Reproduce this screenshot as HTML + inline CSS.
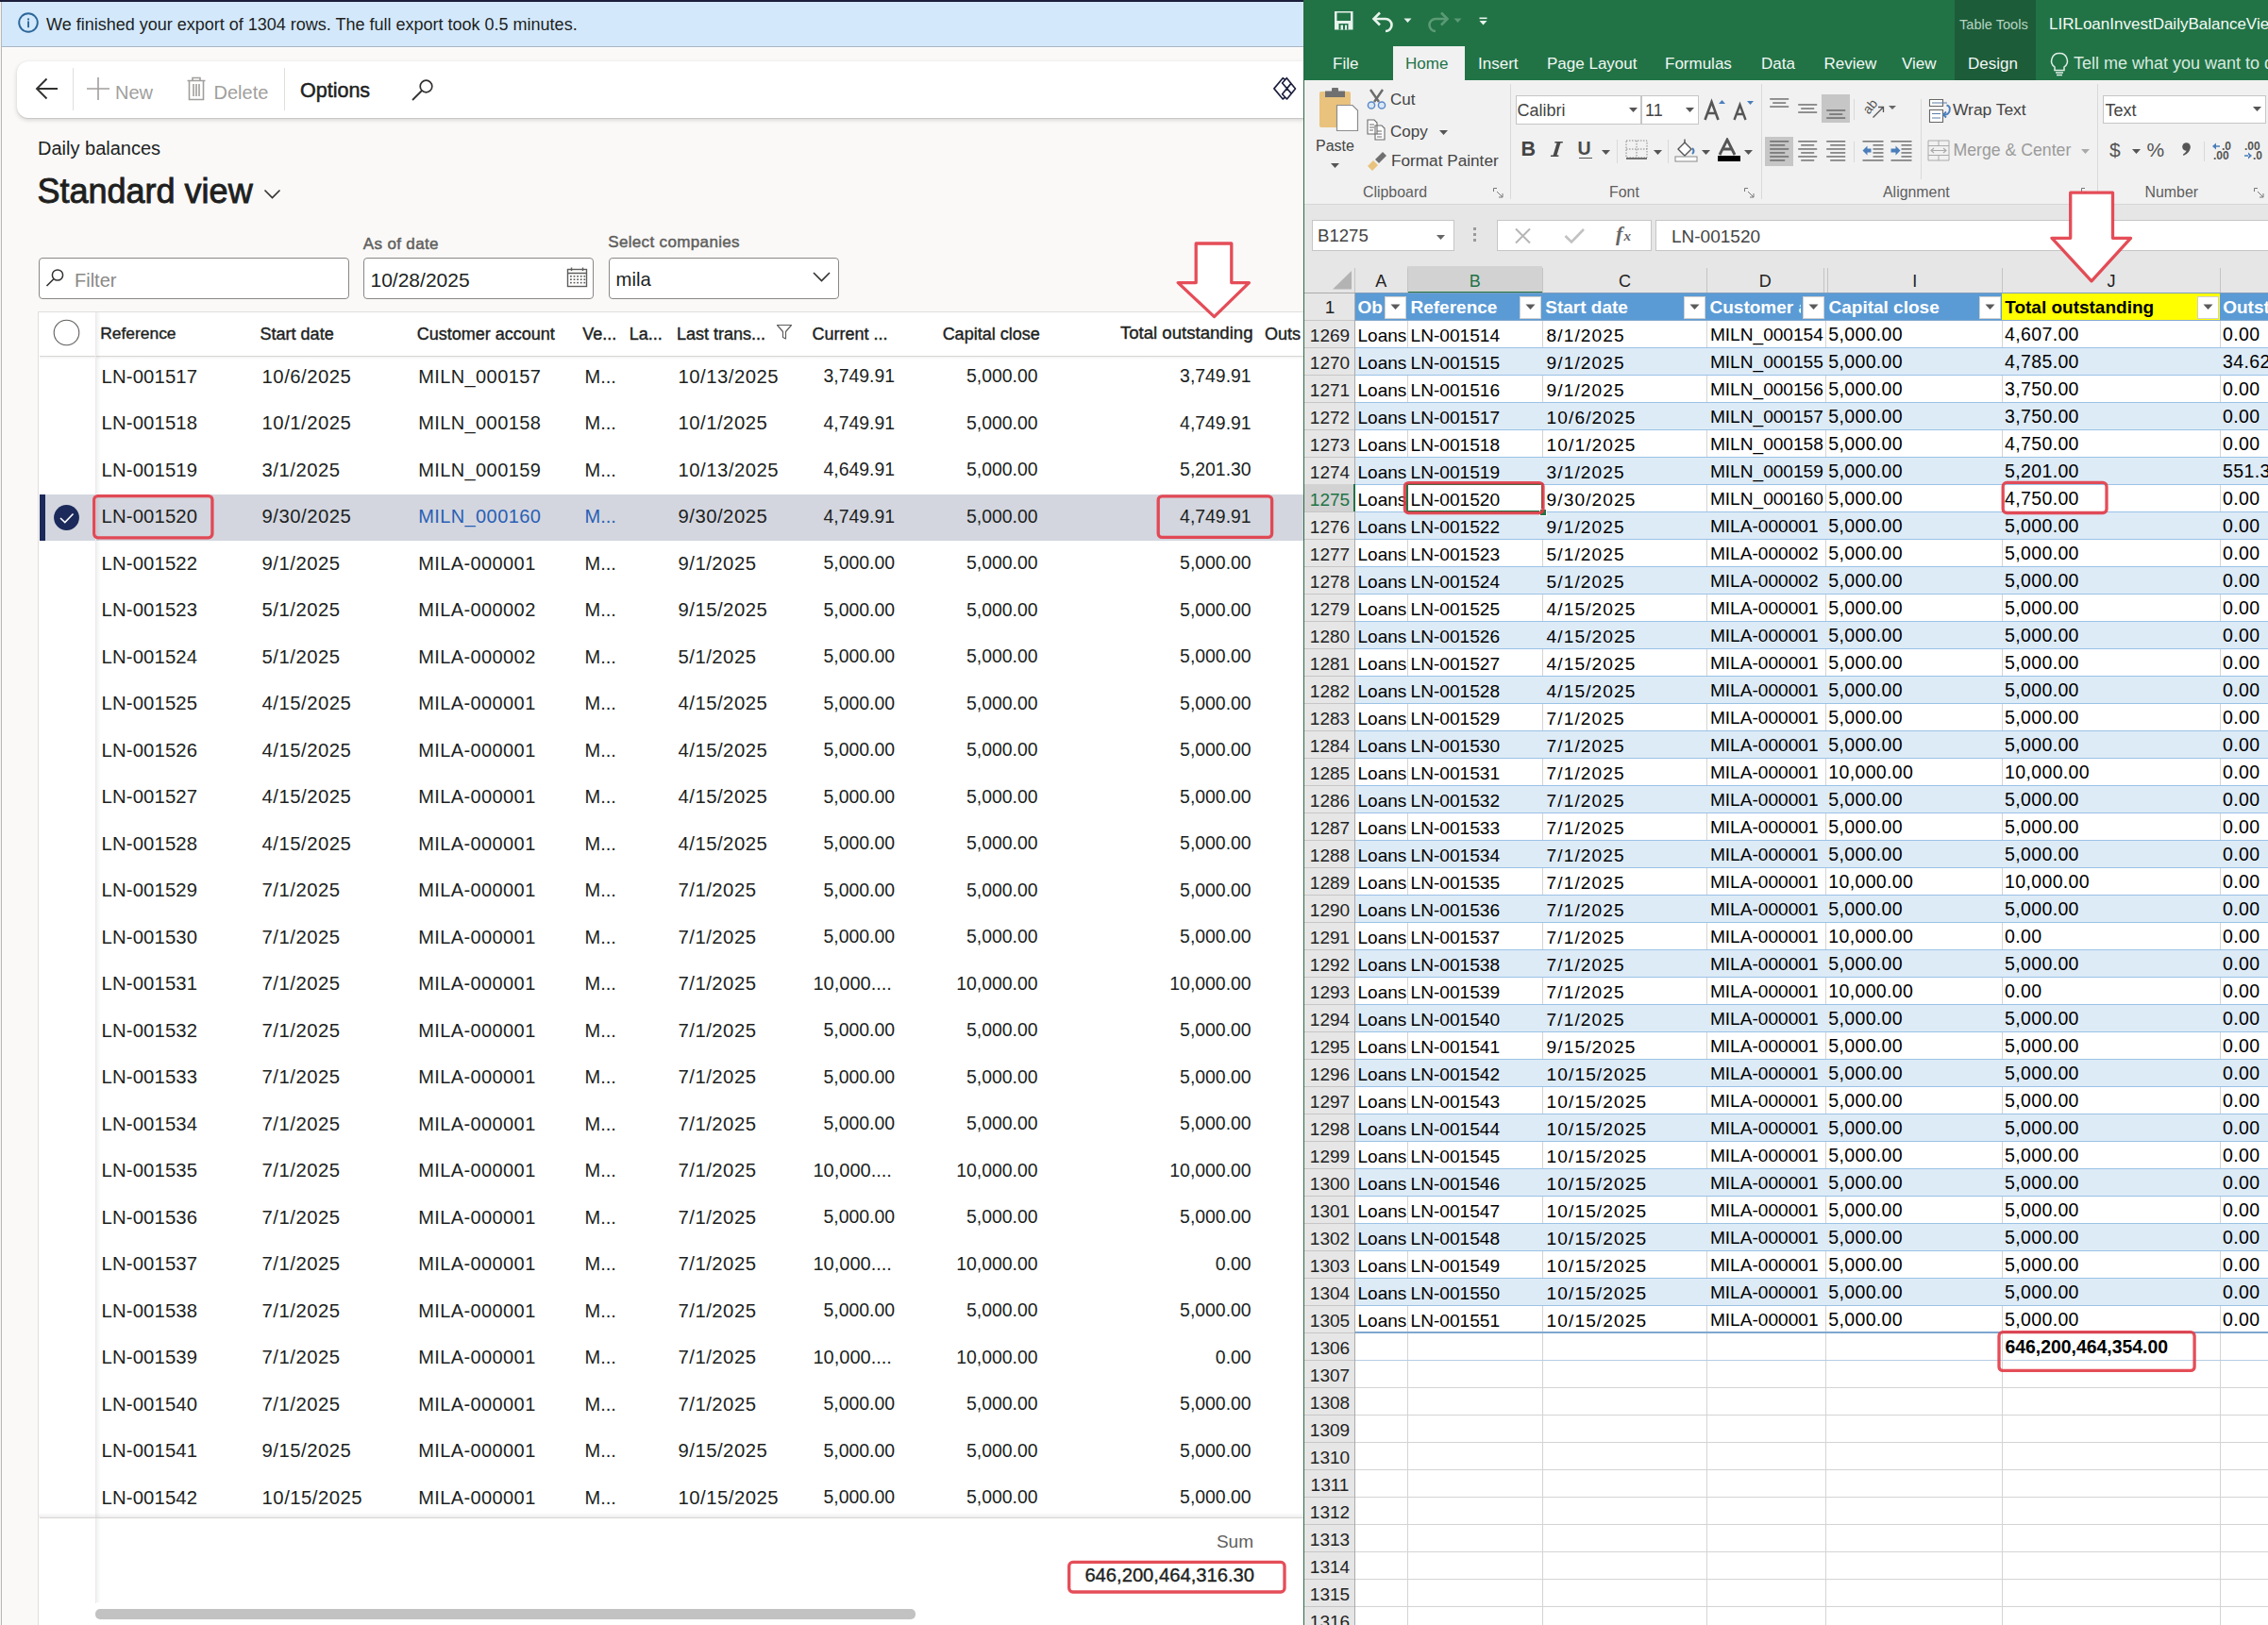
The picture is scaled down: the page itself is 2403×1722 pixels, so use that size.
<!DOCTYPE html>
<html><head><meta charset="utf-8"><title>Daily balances</title>
<style>
html,body{margin:0;padding:0;}
body{width:2403px;height:1722px;overflow:hidden;position:relative;background:#faf9f8;font-family:'Liberation Sans',sans-serif;}
body div, body svg{position:absolute;}
.t{white-space:pre;}
</style></head><body>
<div style="left:0px;top:0px;width:1px;height:1722px;background:#f4f4f4"></div>
<div style="left:1px;top:0px;width:1px;height:1722px;background:#b8b8b8"></div>
<div style="left:2px;top:0px;width:1380px;height:2px;background:#1b1e3c"></div>
<div style="left:0px;top:0px;width:2px;height:2px;background:#1b1e3c"></div>
<div style="left:2px;top:2px;width:1380px;height:47px;background:#d3e8fb"></div>
<div style="left:2px;top:49px;width:1380px;height:1px;background:#a9b5c1"></div>
<div style="left:2px;top:50px;width:1380px;height:1px;background:#ffffff"></div>
<svg style="left:17px;top:11px;" width="26" height="26" viewBox="0 0 26 26"><circle cx="13" cy="13" r="9.8" fill="none" stroke="#2b6699" stroke-width="1.9"/><rect x="12.1" y="8.4" width="1.9" height="2" fill="#2b6699"/><rect x="12.1" y="11.4" width="1.9" height="6.8" fill="#2b6699"/></svg>
<div class="t" style="left:49.0px;top:16.5px;font:normal 18px/18px 'Liberation Sans',sans-serif;color:#201f1e;">We finished your export of 1304 rows. The full export took 0.5 minutes.</div>
<div style="left:18px;top:65px;width:1400px;height:60px;background:#ffffff;border-radius:12px;box-shadow:0 2px 5px rgba(0,0,0,0.16),0 0.3px 0.9px rgba(0,0,0,0.10)"></div>
<svg style="left:36px;top:81px;" width="28" height="26" viewBox="0 0 28 26"><path d="M25 13 H3 M13.5 2.5 L3 13 L13.5 23.5" fill="none" stroke="#323130" stroke-width="1.9" stroke-linecap="butt" stroke-linejoin="miter"/></svg>
<div style="left:77px;top:72px;width:1px;height:45px;background:#e1dfdd"></div>
<svg style="left:90px;top:80px;" width="28" height="28" viewBox="0 0 28 28"><path d="M14 2 V26 M2 14 H26" fill="none" stroke="#a19f9d" stroke-width="1.6"/></svg>
<div class="t" style="left:122.0px;top:88.1px;font:normal 20px/20px 'Liberation Sans',sans-serif;color:#a19f9d;">New</div>
<svg style="left:195px;top:80px;" width="26" height="28" viewBox="0 0 26 28"><path d="M3.5 5.5 H22.5 M9 5.5 V2.5 H17 V5.5 M5.5 5.5 V25.5 H20.5 V5.5 M10 9 V22 M13 9 V22 M16 9 V22" fill="none" stroke="#a19f9d" stroke-width="1.6"/></svg>
<div class="t" style="left:226.5px;top:87.5px;font:normal 20px/20px 'Liberation Sans',sans-serif;color:#a19f9d;">Delete</div>
<div style="left:301px;top:72px;width:1px;height:45px;background:#e1dfdd"></div>
<div class="t" style="left:318.0px;top:86.2px;font:normal 21.5px/21.5px 'Liberation Sans',sans-serif;color:#201f1e;-webkit-text-stroke:0.5px #201f1e">Options</div>
<svg style="left:434px;top:83px;" width="28" height="26" viewBox="0 0 28 26"><circle cx="17.5" cy="8.5" r="6.3" fill="none" stroke="#323130" stroke-width="1.7"/><path d="M13 13 L3 23" stroke="#323130" stroke-width="1.8" fill="none"/></svg>
<svg style="left:1344px;top:78px;" width="34" height="32" viewBox="0 0 34 32"><path d="M17.6 6.6 L15.2 4.7 L5.9 15.9 L15.2 27.0 L17.6 25.1 M19.3 4.7 L28.5 15.9 L19.5 27.0 L14.6 21.7 L24.0 10.4 M19.3 4.7 L14.6 10.0 L24.0 20.9" fill="none" stroke="#1b1f3d" stroke-width="1.65" stroke-linejoin="round" stroke-linecap="round"/></svg>
<div class="t" style="left:40.0px;top:147.1px;font:normal 20px/20px 'Liberation Sans',sans-serif;color:#201f1e;">Daily balances</div>
<div class="t" style="left:39.5px;top:184.8px;font:normal 36px/36px 'Liberation Sans',sans-serif;color:#201f1e;-webkit-text-stroke:0.9px #201f1e">Standard view</div>
<svg style="left:278px;top:198px;" width="22" height="16" viewBox="0 0 22 16"><path d="M2.5 3.5 L10.5 11.5 L18.5 3.5" fill="none" stroke="#323130" stroke-width="1.6"/></svg>
<div style="left:40.5px;top:272.5px;width:327px;height:42px;background:#ffffff;border:1px solid #8a8886;border-radius:4px"></div>
<svg style="left:47px;top:283px;" width="24" height="24" viewBox="0 0 24 24"><circle cx="14" cy="8.5" r="5.6" fill="none" stroke="#323130" stroke-width="1.5"/><path d="M10 12.5 L2.5 20" stroke="#323130" stroke-width="1.6" fill="none"/></svg>
<div class="t" style="left:79.0px;top:286.7px;font:normal 20px/20px 'Liberation Sans',sans-serif;color:#8a8886;">Filter</div>
<div class="t" style="left:384.8px;top:249.6px;font:normal 17px/17px 'Liberation Sans',sans-serif;color:#605e5c;-webkit-text-stroke:0.45px #605e5c;letter-spacing:0.35px">As of date</div>
<div style="left:385.2px;top:273.2px;width:242px;height:41.5px;background:#ffffff;border:1px solid #8a8886;border-radius:4px"></div>
<div class="t" style="left:392.5px;top:285.8px;font:normal 21px/21px 'Liberation Sans',sans-serif;color:#201f1e;">10/28/2025</div>
<svg style="left:599px;top:282px;" width="26" height="24" viewBox="0 0 26 24"><rect x="2.5" y="3.5" width="20" height="18" fill="none" stroke="#605e5c" stroke-width="1.4"/><path d="M2.5 7.5 H22.5 M6.5 1.5 V5 M18.5 1.5 V5" stroke="#605e5c" stroke-width="1.4" fill="none"/><rect x="5.0" y="10.0" width="1.8" height="1.6" fill="#605e5c"/><rect x="5.0" y="13.4" width="1.8" height="1.6" fill="#605e5c"/><rect x="5.0" y="16.8" width="1.8" height="1.6" fill="#605e5c"/><rect x="8.6" y="10.0" width="1.8" height="1.6" fill="#605e5c"/><rect x="8.6" y="13.4" width="1.8" height="1.6" fill="#605e5c"/><rect x="8.6" y="16.8" width="1.8" height="1.6" fill="#605e5c"/><rect x="12.2" y="10.0" width="1.8" height="1.6" fill="#605e5c"/><rect x="12.2" y="13.4" width="1.8" height="1.6" fill="#605e5c"/><rect x="12.2" y="16.8" width="1.8" height="1.6" fill="#605e5c"/><rect x="15.8" y="10.0" width="1.8" height="1.6" fill="#605e5c"/><rect x="15.8" y="13.4" width="1.8" height="1.6" fill="#605e5c"/><rect x="15.8" y="16.8" width="1.8" height="1.6" fill="#605e5c"/><rect x="19.4" y="10.0" width="1.8" height="1.6" fill="#605e5c"/><rect x="19.4" y="13.4" width="1.8" height="1.6" fill="#605e5c"/><rect x="19.4" y="16.8" width="1.8" height="1.6" fill="#605e5c"/></svg>
<div class="t" style="left:644.2px;top:248.3px;font:normal 17px/17px 'Liberation Sans',sans-serif;color:#605e5c;-webkit-text-stroke:0.45px #605e5c;letter-spacing:0.35px">Select companies</div>
<div style="left:645.3px;top:272.5px;width:241.5px;height:42px;background:#ffffff;border:1px solid #8a8886;border-radius:4px"></div>
<div class="t" style="left:652.5px;top:286.4px;font:normal 20.3px/20.3px 'Liberation Sans',sans-serif;color:#201f1e;">mila</div>
<svg style="left:859px;top:285px;" width="24" height="18" viewBox="0 0 24 18"><path d="M3 4 L11.5 12.5 L20 4" fill="none" stroke="#323130" stroke-width="1.6"/></svg>
<div style="left:40px;top:329.5px;width:1400px;height:1400px;background:#ffffff;border-top:1px solid #e1dfdd;border-left:1px solid #e1dfdd"></div>
<div style="left:41.5px;top:523.5px;width:1340px;height:49px;background:#d3d6df"></div>
<div style="left:41.5px;top:523.5px;width:6px;height:49px;background:#1b2a5a"></div>
<svg style="left:55px;top:532.7px;" width="32" height="32" viewBox="0 0 32 32"><circle cx="15.5" cy="15.5" r="13.4" fill="#1b2a5a"/><path d="M9 16 L13.8 20.6 L22.5 11.5" fill="none" stroke="#ffffff" stroke-width="1.6"/></svg>
<div class="t" style="left:107.5px;top:388.5px;font:normal 20.3px/20.3px 'Liberation Sans',sans-serif;color:#201f1e;letter-spacing:0.15px">LN-001517</div>
<div class="t" style="left:277.6px;top:388.5px;font:normal 20.3px/20.3px 'Liberation Sans',sans-serif;color:#201f1e;letter-spacing:0.5px">10/6/2025</div>
<div class="t" style="left:443.2px;top:388.8px;font:normal 20px/20px 'Liberation Sans',sans-serif;color:#201f1e;letter-spacing:0.4px">MILN_000157</div>
<div class="t" style="left:619.5px;top:388.8px;font:normal 20px/20px 'Liberation Sans',sans-serif;color:#201f1e;">M...</div>
<div class="t" style="left:718.5px;top:388.5px;font:normal 20.3px/20.3px 'Liberation Sans',sans-serif;color:#201f1e;letter-spacing:0.5px">10/13/2025</div>
<div class="t" style="left:-52.0px;width:1000px;text-align:right;top:389.3px;font:normal 19.4px/19.4px 'Liberation Sans',sans-serif;color:#201f1e;">3,749.91</div>
<div class="t" style="left:99.5px;width:1000px;text-align:right;top:389.3px;font:normal 19.4px/19.4px 'Liberation Sans',sans-serif;color:#201f1e;">5,000.00</div>
<div class="t" style="left:325.6px;width:1000px;text-align:right;top:389.3px;font:normal 19.4px/19.4px 'Liberation Sans',sans-serif;color:#201f1e;">3,749.91</div>
<div class="t" style="left:107.5px;top:438.0px;font:normal 20.3px/20.3px 'Liberation Sans',sans-serif;color:#201f1e;letter-spacing:0.15px">LN-001518</div>
<div class="t" style="left:277.6px;top:438.0px;font:normal 20.3px/20.3px 'Liberation Sans',sans-serif;color:#201f1e;letter-spacing:0.5px">10/1/2025</div>
<div class="t" style="left:443.2px;top:438.3px;font:normal 20px/20px 'Liberation Sans',sans-serif;color:#201f1e;letter-spacing:0.4px">MILN_000158</div>
<div class="t" style="left:619.5px;top:438.3px;font:normal 20px/20px 'Liberation Sans',sans-serif;color:#201f1e;">M...</div>
<div class="t" style="left:718.5px;top:438.0px;font:normal 20.3px/20.3px 'Liberation Sans',sans-serif;color:#201f1e;letter-spacing:0.5px">10/1/2025</div>
<div class="t" style="left:-52.0px;width:1000px;text-align:right;top:438.8px;font:normal 19.4px/19.4px 'Liberation Sans',sans-serif;color:#201f1e;">4,749.91</div>
<div class="t" style="left:99.5px;width:1000px;text-align:right;top:438.8px;font:normal 19.4px/19.4px 'Liberation Sans',sans-serif;color:#201f1e;">5,000.00</div>
<div class="t" style="left:325.6px;width:1000px;text-align:right;top:438.8px;font:normal 19.4px/19.4px 'Liberation Sans',sans-serif;color:#201f1e;">4,749.91</div>
<div class="t" style="left:107.5px;top:487.5px;font:normal 20.3px/20.3px 'Liberation Sans',sans-serif;color:#201f1e;letter-spacing:0.15px">LN-001519</div>
<div class="t" style="left:277.6px;top:487.5px;font:normal 20.3px/20.3px 'Liberation Sans',sans-serif;color:#201f1e;letter-spacing:0.5px">3/1/2025</div>
<div class="t" style="left:443.2px;top:487.8px;font:normal 20px/20px 'Liberation Sans',sans-serif;color:#201f1e;letter-spacing:0.4px">MILN_000159</div>
<div class="t" style="left:619.5px;top:487.8px;font:normal 20px/20px 'Liberation Sans',sans-serif;color:#201f1e;">M...</div>
<div class="t" style="left:718.5px;top:487.5px;font:normal 20.3px/20.3px 'Liberation Sans',sans-serif;color:#201f1e;letter-spacing:0.5px">10/13/2025</div>
<div class="t" style="left:-52.0px;width:1000px;text-align:right;top:488.3px;font:normal 19.4px/19.4px 'Liberation Sans',sans-serif;color:#201f1e;">4,649.91</div>
<div class="t" style="left:99.5px;width:1000px;text-align:right;top:488.3px;font:normal 19.4px/19.4px 'Liberation Sans',sans-serif;color:#201f1e;">5,000.00</div>
<div class="t" style="left:325.6px;width:1000px;text-align:right;top:488.3px;font:normal 19.4px/19.4px 'Liberation Sans',sans-serif;color:#201f1e;">5,201.30</div>
<div class="t" style="left:107.5px;top:537.0px;font:normal 20.3px/20.3px 'Liberation Sans',sans-serif;color:#201f1e;letter-spacing:0.15px">LN-001520</div>
<div class="t" style="left:277.6px;top:537.0px;font:normal 20.3px/20.3px 'Liberation Sans',sans-serif;color:#201f1e;letter-spacing:0.5px">9/30/2025</div>
<div class="t" style="left:443.2px;top:537.3px;font:normal 20px/20px 'Liberation Sans',sans-serif;color:#2a5fb5;letter-spacing:0.4px">MILN_000160</div>
<div class="t" style="left:619.5px;top:537.3px;font:normal 20px/20px 'Liberation Sans',sans-serif;color:#2a5fb5;">M...</div>
<div class="t" style="left:718.5px;top:537.0px;font:normal 20.3px/20.3px 'Liberation Sans',sans-serif;color:#201f1e;letter-spacing:0.5px">9/30/2025</div>
<div class="t" style="left:-52.0px;width:1000px;text-align:right;top:537.8px;font:normal 19.4px/19.4px 'Liberation Sans',sans-serif;color:#201f1e;">4,749.91</div>
<div class="t" style="left:99.5px;width:1000px;text-align:right;top:537.8px;font:normal 19.4px/19.4px 'Liberation Sans',sans-serif;color:#201f1e;">5,000.00</div>
<div class="t" style="left:325.6px;width:1000px;text-align:right;top:537.8px;font:normal 19.4px/19.4px 'Liberation Sans',sans-serif;color:#201f1e;">4,749.91</div>
<div class="t" style="left:107.5px;top:586.5px;font:normal 20.3px/20.3px 'Liberation Sans',sans-serif;color:#201f1e;letter-spacing:0.15px">LN-001522</div>
<div class="t" style="left:277.6px;top:586.5px;font:normal 20.3px/20.3px 'Liberation Sans',sans-serif;color:#201f1e;letter-spacing:0.5px">9/1/2025</div>
<div class="t" style="left:443.2px;top:586.8px;font:normal 20px/20px 'Liberation Sans',sans-serif;color:#201f1e;letter-spacing:0.4px">MILA-000001</div>
<div class="t" style="left:619.5px;top:586.8px;font:normal 20px/20px 'Liberation Sans',sans-serif;color:#201f1e;">M...</div>
<div class="t" style="left:718.5px;top:586.5px;font:normal 20.3px/20.3px 'Liberation Sans',sans-serif;color:#201f1e;letter-spacing:0.5px">9/1/2025</div>
<div class="t" style="left:-52.0px;width:1000px;text-align:right;top:587.3px;font:normal 19.4px/19.4px 'Liberation Sans',sans-serif;color:#201f1e;">5,000.00</div>
<div class="t" style="left:99.5px;width:1000px;text-align:right;top:587.3px;font:normal 19.4px/19.4px 'Liberation Sans',sans-serif;color:#201f1e;">5,000.00</div>
<div class="t" style="left:325.6px;width:1000px;text-align:right;top:587.3px;font:normal 19.4px/19.4px 'Liberation Sans',sans-serif;color:#201f1e;">5,000.00</div>
<div class="t" style="left:107.5px;top:636.0px;font:normal 20.3px/20.3px 'Liberation Sans',sans-serif;color:#201f1e;letter-spacing:0.15px">LN-001523</div>
<div class="t" style="left:277.6px;top:636.0px;font:normal 20.3px/20.3px 'Liberation Sans',sans-serif;color:#201f1e;letter-spacing:0.5px">5/1/2025</div>
<div class="t" style="left:443.2px;top:636.3px;font:normal 20px/20px 'Liberation Sans',sans-serif;color:#201f1e;letter-spacing:0.4px">MILA-000002</div>
<div class="t" style="left:619.5px;top:636.3px;font:normal 20px/20px 'Liberation Sans',sans-serif;color:#201f1e;">M...</div>
<div class="t" style="left:718.5px;top:636.0px;font:normal 20.3px/20.3px 'Liberation Sans',sans-serif;color:#201f1e;letter-spacing:0.5px">9/15/2025</div>
<div class="t" style="left:-52.0px;width:1000px;text-align:right;top:636.8px;font:normal 19.4px/19.4px 'Liberation Sans',sans-serif;color:#201f1e;">5,000.00</div>
<div class="t" style="left:99.5px;width:1000px;text-align:right;top:636.8px;font:normal 19.4px/19.4px 'Liberation Sans',sans-serif;color:#201f1e;">5,000.00</div>
<div class="t" style="left:325.6px;width:1000px;text-align:right;top:636.8px;font:normal 19.4px/19.4px 'Liberation Sans',sans-serif;color:#201f1e;">5,000.00</div>
<div class="t" style="left:107.5px;top:685.5px;font:normal 20.3px/20.3px 'Liberation Sans',sans-serif;color:#201f1e;letter-spacing:0.15px">LN-001524</div>
<div class="t" style="left:277.6px;top:685.5px;font:normal 20.3px/20.3px 'Liberation Sans',sans-serif;color:#201f1e;letter-spacing:0.5px">5/1/2025</div>
<div class="t" style="left:443.2px;top:685.8px;font:normal 20px/20px 'Liberation Sans',sans-serif;color:#201f1e;letter-spacing:0.4px">MILA-000002</div>
<div class="t" style="left:619.5px;top:685.8px;font:normal 20px/20px 'Liberation Sans',sans-serif;color:#201f1e;">M...</div>
<div class="t" style="left:718.5px;top:685.5px;font:normal 20.3px/20.3px 'Liberation Sans',sans-serif;color:#201f1e;letter-spacing:0.5px">5/1/2025</div>
<div class="t" style="left:-52.0px;width:1000px;text-align:right;top:686.3px;font:normal 19.4px/19.4px 'Liberation Sans',sans-serif;color:#201f1e;">5,000.00</div>
<div class="t" style="left:99.5px;width:1000px;text-align:right;top:686.3px;font:normal 19.4px/19.4px 'Liberation Sans',sans-serif;color:#201f1e;">5,000.00</div>
<div class="t" style="left:325.6px;width:1000px;text-align:right;top:686.3px;font:normal 19.4px/19.4px 'Liberation Sans',sans-serif;color:#201f1e;">5,000.00</div>
<div class="t" style="left:107.5px;top:735.0px;font:normal 20.3px/20.3px 'Liberation Sans',sans-serif;color:#201f1e;letter-spacing:0.15px">LN-001525</div>
<div class="t" style="left:277.6px;top:735.0px;font:normal 20.3px/20.3px 'Liberation Sans',sans-serif;color:#201f1e;letter-spacing:0.5px">4/15/2025</div>
<div class="t" style="left:443.2px;top:735.3px;font:normal 20px/20px 'Liberation Sans',sans-serif;color:#201f1e;letter-spacing:0.4px">MILA-000001</div>
<div class="t" style="left:619.5px;top:735.3px;font:normal 20px/20px 'Liberation Sans',sans-serif;color:#201f1e;">M...</div>
<div class="t" style="left:718.5px;top:735.0px;font:normal 20.3px/20.3px 'Liberation Sans',sans-serif;color:#201f1e;letter-spacing:0.5px">4/15/2025</div>
<div class="t" style="left:-52.0px;width:1000px;text-align:right;top:735.8px;font:normal 19.4px/19.4px 'Liberation Sans',sans-serif;color:#201f1e;">5,000.00</div>
<div class="t" style="left:99.5px;width:1000px;text-align:right;top:735.8px;font:normal 19.4px/19.4px 'Liberation Sans',sans-serif;color:#201f1e;">5,000.00</div>
<div class="t" style="left:325.6px;width:1000px;text-align:right;top:735.8px;font:normal 19.4px/19.4px 'Liberation Sans',sans-serif;color:#201f1e;">5,000.00</div>
<div class="t" style="left:107.5px;top:784.5px;font:normal 20.3px/20.3px 'Liberation Sans',sans-serif;color:#201f1e;letter-spacing:0.15px">LN-001526</div>
<div class="t" style="left:277.6px;top:784.5px;font:normal 20.3px/20.3px 'Liberation Sans',sans-serif;color:#201f1e;letter-spacing:0.5px">4/15/2025</div>
<div class="t" style="left:443.2px;top:784.8px;font:normal 20px/20px 'Liberation Sans',sans-serif;color:#201f1e;letter-spacing:0.4px">MILA-000001</div>
<div class="t" style="left:619.5px;top:784.8px;font:normal 20px/20px 'Liberation Sans',sans-serif;color:#201f1e;">M...</div>
<div class="t" style="left:718.5px;top:784.5px;font:normal 20.3px/20.3px 'Liberation Sans',sans-serif;color:#201f1e;letter-spacing:0.5px">4/15/2025</div>
<div class="t" style="left:-52.0px;width:1000px;text-align:right;top:785.3px;font:normal 19.4px/19.4px 'Liberation Sans',sans-serif;color:#201f1e;">5,000.00</div>
<div class="t" style="left:99.5px;width:1000px;text-align:right;top:785.3px;font:normal 19.4px/19.4px 'Liberation Sans',sans-serif;color:#201f1e;">5,000.00</div>
<div class="t" style="left:325.6px;width:1000px;text-align:right;top:785.3px;font:normal 19.4px/19.4px 'Liberation Sans',sans-serif;color:#201f1e;">5,000.00</div>
<div class="t" style="left:107.5px;top:834.0px;font:normal 20.3px/20.3px 'Liberation Sans',sans-serif;color:#201f1e;letter-spacing:0.15px">LN-001527</div>
<div class="t" style="left:277.6px;top:834.0px;font:normal 20.3px/20.3px 'Liberation Sans',sans-serif;color:#201f1e;letter-spacing:0.5px">4/15/2025</div>
<div class="t" style="left:443.2px;top:834.3px;font:normal 20px/20px 'Liberation Sans',sans-serif;color:#201f1e;letter-spacing:0.4px">MILA-000001</div>
<div class="t" style="left:619.5px;top:834.3px;font:normal 20px/20px 'Liberation Sans',sans-serif;color:#201f1e;">M...</div>
<div class="t" style="left:718.5px;top:834.0px;font:normal 20.3px/20.3px 'Liberation Sans',sans-serif;color:#201f1e;letter-spacing:0.5px">4/15/2025</div>
<div class="t" style="left:-52.0px;width:1000px;text-align:right;top:834.8px;font:normal 19.4px/19.4px 'Liberation Sans',sans-serif;color:#201f1e;">5,000.00</div>
<div class="t" style="left:99.5px;width:1000px;text-align:right;top:834.8px;font:normal 19.4px/19.4px 'Liberation Sans',sans-serif;color:#201f1e;">5,000.00</div>
<div class="t" style="left:325.6px;width:1000px;text-align:right;top:834.8px;font:normal 19.4px/19.4px 'Liberation Sans',sans-serif;color:#201f1e;">5,000.00</div>
<div class="t" style="left:107.5px;top:883.5px;font:normal 20.3px/20.3px 'Liberation Sans',sans-serif;color:#201f1e;letter-spacing:0.15px">LN-001528</div>
<div class="t" style="left:277.6px;top:883.5px;font:normal 20.3px/20.3px 'Liberation Sans',sans-serif;color:#201f1e;letter-spacing:0.5px">4/15/2025</div>
<div class="t" style="left:443.2px;top:883.8px;font:normal 20px/20px 'Liberation Sans',sans-serif;color:#201f1e;letter-spacing:0.4px">MILA-000001</div>
<div class="t" style="left:619.5px;top:883.8px;font:normal 20px/20px 'Liberation Sans',sans-serif;color:#201f1e;">M...</div>
<div class="t" style="left:718.5px;top:883.5px;font:normal 20.3px/20.3px 'Liberation Sans',sans-serif;color:#201f1e;letter-spacing:0.5px">4/15/2025</div>
<div class="t" style="left:-52.0px;width:1000px;text-align:right;top:884.3px;font:normal 19.4px/19.4px 'Liberation Sans',sans-serif;color:#201f1e;">5,000.00</div>
<div class="t" style="left:99.5px;width:1000px;text-align:right;top:884.3px;font:normal 19.4px/19.4px 'Liberation Sans',sans-serif;color:#201f1e;">5,000.00</div>
<div class="t" style="left:325.6px;width:1000px;text-align:right;top:884.3px;font:normal 19.4px/19.4px 'Liberation Sans',sans-serif;color:#201f1e;">5,000.00</div>
<div class="t" style="left:107.5px;top:933.0px;font:normal 20.3px/20.3px 'Liberation Sans',sans-serif;color:#201f1e;letter-spacing:0.15px">LN-001529</div>
<div class="t" style="left:277.6px;top:933.0px;font:normal 20.3px/20.3px 'Liberation Sans',sans-serif;color:#201f1e;letter-spacing:0.5px">7/1/2025</div>
<div class="t" style="left:443.2px;top:933.3px;font:normal 20px/20px 'Liberation Sans',sans-serif;color:#201f1e;letter-spacing:0.4px">MILA-000001</div>
<div class="t" style="left:619.5px;top:933.3px;font:normal 20px/20px 'Liberation Sans',sans-serif;color:#201f1e;">M...</div>
<div class="t" style="left:718.5px;top:933.0px;font:normal 20.3px/20.3px 'Liberation Sans',sans-serif;color:#201f1e;letter-spacing:0.5px">7/1/2025</div>
<div class="t" style="left:-52.0px;width:1000px;text-align:right;top:933.8px;font:normal 19.4px/19.4px 'Liberation Sans',sans-serif;color:#201f1e;">5,000.00</div>
<div class="t" style="left:99.5px;width:1000px;text-align:right;top:933.8px;font:normal 19.4px/19.4px 'Liberation Sans',sans-serif;color:#201f1e;">5,000.00</div>
<div class="t" style="left:325.6px;width:1000px;text-align:right;top:933.8px;font:normal 19.4px/19.4px 'Liberation Sans',sans-serif;color:#201f1e;">5,000.00</div>
<div class="t" style="left:107.5px;top:982.5px;font:normal 20.3px/20.3px 'Liberation Sans',sans-serif;color:#201f1e;letter-spacing:0.15px">LN-001530</div>
<div class="t" style="left:277.6px;top:982.5px;font:normal 20.3px/20.3px 'Liberation Sans',sans-serif;color:#201f1e;letter-spacing:0.5px">7/1/2025</div>
<div class="t" style="left:443.2px;top:982.8px;font:normal 20px/20px 'Liberation Sans',sans-serif;color:#201f1e;letter-spacing:0.4px">MILA-000001</div>
<div class="t" style="left:619.5px;top:982.8px;font:normal 20px/20px 'Liberation Sans',sans-serif;color:#201f1e;">M...</div>
<div class="t" style="left:718.5px;top:982.5px;font:normal 20.3px/20.3px 'Liberation Sans',sans-serif;color:#201f1e;letter-spacing:0.5px">7/1/2025</div>
<div class="t" style="left:-52.0px;width:1000px;text-align:right;top:983.3px;font:normal 19.4px/19.4px 'Liberation Sans',sans-serif;color:#201f1e;">5,000.00</div>
<div class="t" style="left:99.5px;width:1000px;text-align:right;top:983.3px;font:normal 19.4px/19.4px 'Liberation Sans',sans-serif;color:#201f1e;">5,000.00</div>
<div class="t" style="left:325.6px;width:1000px;text-align:right;top:983.3px;font:normal 19.4px/19.4px 'Liberation Sans',sans-serif;color:#201f1e;">5,000.00</div>
<div class="t" style="left:107.5px;top:1032.0px;font:normal 20.3px/20.3px 'Liberation Sans',sans-serif;color:#201f1e;letter-spacing:0.15px">LN-001531</div>
<div class="t" style="left:277.6px;top:1032.0px;font:normal 20.3px/20.3px 'Liberation Sans',sans-serif;color:#201f1e;letter-spacing:0.5px">7/1/2025</div>
<div class="t" style="left:443.2px;top:1032.3px;font:normal 20px/20px 'Liberation Sans',sans-serif;color:#201f1e;letter-spacing:0.4px">MILA-000001</div>
<div class="t" style="left:619.5px;top:1032.3px;font:normal 20px/20px 'Liberation Sans',sans-serif;color:#201f1e;">M...</div>
<div class="t" style="left:718.5px;top:1032.0px;font:normal 20.3px/20.3px 'Liberation Sans',sans-serif;color:#201f1e;letter-spacing:0.5px">7/1/2025</div>
<div class="t" style="left:861.5px;top:1032.3px;font:normal 20px/20px 'Liberation Sans',sans-serif;color:#201f1e;">10,000....</div>
<div class="t" style="left:99.5px;width:1000px;text-align:right;top:1032.8px;font:normal 19.4px/19.4px 'Liberation Sans',sans-serif;color:#201f1e;">10,000.00</div>
<div class="t" style="left:325.6px;width:1000px;text-align:right;top:1032.8px;font:normal 19.4px/19.4px 'Liberation Sans',sans-serif;color:#201f1e;">10,000.00</div>
<div class="t" style="left:107.5px;top:1081.5px;font:normal 20.3px/20.3px 'Liberation Sans',sans-serif;color:#201f1e;letter-spacing:0.15px">LN-001532</div>
<div class="t" style="left:277.6px;top:1081.5px;font:normal 20.3px/20.3px 'Liberation Sans',sans-serif;color:#201f1e;letter-spacing:0.5px">7/1/2025</div>
<div class="t" style="left:443.2px;top:1081.8px;font:normal 20px/20px 'Liberation Sans',sans-serif;color:#201f1e;letter-spacing:0.4px">MILA-000001</div>
<div class="t" style="left:619.5px;top:1081.8px;font:normal 20px/20px 'Liberation Sans',sans-serif;color:#201f1e;">M...</div>
<div class="t" style="left:718.5px;top:1081.5px;font:normal 20.3px/20.3px 'Liberation Sans',sans-serif;color:#201f1e;letter-spacing:0.5px">7/1/2025</div>
<div class="t" style="left:-52.0px;width:1000px;text-align:right;top:1082.3px;font:normal 19.4px/19.4px 'Liberation Sans',sans-serif;color:#201f1e;">5,000.00</div>
<div class="t" style="left:99.5px;width:1000px;text-align:right;top:1082.3px;font:normal 19.4px/19.4px 'Liberation Sans',sans-serif;color:#201f1e;">5,000.00</div>
<div class="t" style="left:325.6px;width:1000px;text-align:right;top:1082.3px;font:normal 19.4px/19.4px 'Liberation Sans',sans-serif;color:#201f1e;">5,000.00</div>
<div class="t" style="left:107.5px;top:1131.0px;font:normal 20.3px/20.3px 'Liberation Sans',sans-serif;color:#201f1e;letter-spacing:0.15px">LN-001533</div>
<div class="t" style="left:277.6px;top:1131.0px;font:normal 20.3px/20.3px 'Liberation Sans',sans-serif;color:#201f1e;letter-spacing:0.5px">7/1/2025</div>
<div class="t" style="left:443.2px;top:1131.3px;font:normal 20px/20px 'Liberation Sans',sans-serif;color:#201f1e;letter-spacing:0.4px">MILA-000001</div>
<div class="t" style="left:619.5px;top:1131.3px;font:normal 20px/20px 'Liberation Sans',sans-serif;color:#201f1e;">M...</div>
<div class="t" style="left:718.5px;top:1131.0px;font:normal 20.3px/20.3px 'Liberation Sans',sans-serif;color:#201f1e;letter-spacing:0.5px">7/1/2025</div>
<div class="t" style="left:-52.0px;width:1000px;text-align:right;top:1131.8px;font:normal 19.4px/19.4px 'Liberation Sans',sans-serif;color:#201f1e;">5,000.00</div>
<div class="t" style="left:99.5px;width:1000px;text-align:right;top:1131.8px;font:normal 19.4px/19.4px 'Liberation Sans',sans-serif;color:#201f1e;">5,000.00</div>
<div class="t" style="left:325.6px;width:1000px;text-align:right;top:1131.8px;font:normal 19.4px/19.4px 'Liberation Sans',sans-serif;color:#201f1e;">5,000.00</div>
<div class="t" style="left:107.5px;top:1180.5px;font:normal 20.3px/20.3px 'Liberation Sans',sans-serif;color:#201f1e;letter-spacing:0.15px">LN-001534</div>
<div class="t" style="left:277.6px;top:1180.5px;font:normal 20.3px/20.3px 'Liberation Sans',sans-serif;color:#201f1e;letter-spacing:0.5px">7/1/2025</div>
<div class="t" style="left:443.2px;top:1180.8px;font:normal 20px/20px 'Liberation Sans',sans-serif;color:#201f1e;letter-spacing:0.4px">MILA-000001</div>
<div class="t" style="left:619.5px;top:1180.8px;font:normal 20px/20px 'Liberation Sans',sans-serif;color:#201f1e;">M...</div>
<div class="t" style="left:718.5px;top:1180.5px;font:normal 20.3px/20.3px 'Liberation Sans',sans-serif;color:#201f1e;letter-spacing:0.5px">7/1/2025</div>
<div class="t" style="left:-52.0px;width:1000px;text-align:right;top:1181.3px;font:normal 19.4px/19.4px 'Liberation Sans',sans-serif;color:#201f1e;">5,000.00</div>
<div class="t" style="left:99.5px;width:1000px;text-align:right;top:1181.3px;font:normal 19.4px/19.4px 'Liberation Sans',sans-serif;color:#201f1e;">5,000.00</div>
<div class="t" style="left:325.6px;width:1000px;text-align:right;top:1181.3px;font:normal 19.4px/19.4px 'Liberation Sans',sans-serif;color:#201f1e;">5,000.00</div>
<div class="t" style="left:107.5px;top:1230.0px;font:normal 20.3px/20.3px 'Liberation Sans',sans-serif;color:#201f1e;letter-spacing:0.15px">LN-001535</div>
<div class="t" style="left:277.6px;top:1230.0px;font:normal 20.3px/20.3px 'Liberation Sans',sans-serif;color:#201f1e;letter-spacing:0.5px">7/1/2025</div>
<div class="t" style="left:443.2px;top:1230.3px;font:normal 20px/20px 'Liberation Sans',sans-serif;color:#201f1e;letter-spacing:0.4px">MILA-000001</div>
<div class="t" style="left:619.5px;top:1230.3px;font:normal 20px/20px 'Liberation Sans',sans-serif;color:#201f1e;">M...</div>
<div class="t" style="left:718.5px;top:1230.0px;font:normal 20.3px/20.3px 'Liberation Sans',sans-serif;color:#201f1e;letter-spacing:0.5px">7/1/2025</div>
<div class="t" style="left:861.5px;top:1230.3px;font:normal 20px/20px 'Liberation Sans',sans-serif;color:#201f1e;">10,000....</div>
<div class="t" style="left:99.5px;width:1000px;text-align:right;top:1230.8px;font:normal 19.4px/19.4px 'Liberation Sans',sans-serif;color:#201f1e;">10,000.00</div>
<div class="t" style="left:325.6px;width:1000px;text-align:right;top:1230.8px;font:normal 19.4px/19.4px 'Liberation Sans',sans-serif;color:#201f1e;">10,000.00</div>
<div class="t" style="left:107.5px;top:1279.5px;font:normal 20.3px/20.3px 'Liberation Sans',sans-serif;color:#201f1e;letter-spacing:0.15px">LN-001536</div>
<div class="t" style="left:277.6px;top:1279.5px;font:normal 20.3px/20.3px 'Liberation Sans',sans-serif;color:#201f1e;letter-spacing:0.5px">7/1/2025</div>
<div class="t" style="left:443.2px;top:1279.8px;font:normal 20px/20px 'Liberation Sans',sans-serif;color:#201f1e;letter-spacing:0.4px">MILA-000001</div>
<div class="t" style="left:619.5px;top:1279.8px;font:normal 20px/20px 'Liberation Sans',sans-serif;color:#201f1e;">M...</div>
<div class="t" style="left:718.5px;top:1279.5px;font:normal 20.3px/20.3px 'Liberation Sans',sans-serif;color:#201f1e;letter-spacing:0.5px">7/1/2025</div>
<div class="t" style="left:-52.0px;width:1000px;text-align:right;top:1280.3px;font:normal 19.4px/19.4px 'Liberation Sans',sans-serif;color:#201f1e;">5,000.00</div>
<div class="t" style="left:99.5px;width:1000px;text-align:right;top:1280.3px;font:normal 19.4px/19.4px 'Liberation Sans',sans-serif;color:#201f1e;">5,000.00</div>
<div class="t" style="left:325.6px;width:1000px;text-align:right;top:1280.3px;font:normal 19.4px/19.4px 'Liberation Sans',sans-serif;color:#201f1e;">5,000.00</div>
<div class="t" style="left:107.5px;top:1329.0px;font:normal 20.3px/20.3px 'Liberation Sans',sans-serif;color:#201f1e;letter-spacing:0.15px">LN-001537</div>
<div class="t" style="left:277.6px;top:1329.0px;font:normal 20.3px/20.3px 'Liberation Sans',sans-serif;color:#201f1e;letter-spacing:0.5px">7/1/2025</div>
<div class="t" style="left:443.2px;top:1329.3px;font:normal 20px/20px 'Liberation Sans',sans-serif;color:#201f1e;letter-spacing:0.4px">MILA-000001</div>
<div class="t" style="left:619.5px;top:1329.3px;font:normal 20px/20px 'Liberation Sans',sans-serif;color:#201f1e;">M...</div>
<div class="t" style="left:718.5px;top:1329.0px;font:normal 20.3px/20.3px 'Liberation Sans',sans-serif;color:#201f1e;letter-spacing:0.5px">7/1/2025</div>
<div class="t" style="left:861.5px;top:1329.3px;font:normal 20px/20px 'Liberation Sans',sans-serif;color:#201f1e;">10,000....</div>
<div class="t" style="left:99.5px;width:1000px;text-align:right;top:1329.8px;font:normal 19.4px/19.4px 'Liberation Sans',sans-serif;color:#201f1e;">10,000.00</div>
<div class="t" style="left:325.6px;width:1000px;text-align:right;top:1329.8px;font:normal 19.4px/19.4px 'Liberation Sans',sans-serif;color:#201f1e;">0.00</div>
<div class="t" style="left:107.5px;top:1378.5px;font:normal 20.3px/20.3px 'Liberation Sans',sans-serif;color:#201f1e;letter-spacing:0.15px">LN-001538</div>
<div class="t" style="left:277.6px;top:1378.5px;font:normal 20.3px/20.3px 'Liberation Sans',sans-serif;color:#201f1e;letter-spacing:0.5px">7/1/2025</div>
<div class="t" style="left:443.2px;top:1378.8px;font:normal 20px/20px 'Liberation Sans',sans-serif;color:#201f1e;letter-spacing:0.4px">MILA-000001</div>
<div class="t" style="left:619.5px;top:1378.8px;font:normal 20px/20px 'Liberation Sans',sans-serif;color:#201f1e;">M...</div>
<div class="t" style="left:718.5px;top:1378.5px;font:normal 20.3px/20.3px 'Liberation Sans',sans-serif;color:#201f1e;letter-spacing:0.5px">7/1/2025</div>
<div class="t" style="left:-52.0px;width:1000px;text-align:right;top:1379.3px;font:normal 19.4px/19.4px 'Liberation Sans',sans-serif;color:#201f1e;">5,000.00</div>
<div class="t" style="left:99.5px;width:1000px;text-align:right;top:1379.3px;font:normal 19.4px/19.4px 'Liberation Sans',sans-serif;color:#201f1e;">5,000.00</div>
<div class="t" style="left:325.6px;width:1000px;text-align:right;top:1379.3px;font:normal 19.4px/19.4px 'Liberation Sans',sans-serif;color:#201f1e;">5,000.00</div>
<div class="t" style="left:107.5px;top:1428.0px;font:normal 20.3px/20.3px 'Liberation Sans',sans-serif;color:#201f1e;letter-spacing:0.15px">LN-001539</div>
<div class="t" style="left:277.6px;top:1428.0px;font:normal 20.3px/20.3px 'Liberation Sans',sans-serif;color:#201f1e;letter-spacing:0.5px">7/1/2025</div>
<div class="t" style="left:443.2px;top:1428.3px;font:normal 20px/20px 'Liberation Sans',sans-serif;color:#201f1e;letter-spacing:0.4px">MILA-000001</div>
<div class="t" style="left:619.5px;top:1428.3px;font:normal 20px/20px 'Liberation Sans',sans-serif;color:#201f1e;">M...</div>
<div class="t" style="left:718.5px;top:1428.0px;font:normal 20.3px/20.3px 'Liberation Sans',sans-serif;color:#201f1e;letter-spacing:0.5px">7/1/2025</div>
<div class="t" style="left:861.5px;top:1428.3px;font:normal 20px/20px 'Liberation Sans',sans-serif;color:#201f1e;">10,000....</div>
<div class="t" style="left:99.5px;width:1000px;text-align:right;top:1428.8px;font:normal 19.4px/19.4px 'Liberation Sans',sans-serif;color:#201f1e;">10,000.00</div>
<div class="t" style="left:325.6px;width:1000px;text-align:right;top:1428.8px;font:normal 19.4px/19.4px 'Liberation Sans',sans-serif;color:#201f1e;">0.00</div>
<div class="t" style="left:107.5px;top:1477.5px;font:normal 20.3px/20.3px 'Liberation Sans',sans-serif;color:#201f1e;letter-spacing:0.15px">LN-001540</div>
<div class="t" style="left:277.6px;top:1477.5px;font:normal 20.3px/20.3px 'Liberation Sans',sans-serif;color:#201f1e;letter-spacing:0.5px">7/1/2025</div>
<div class="t" style="left:443.2px;top:1477.8px;font:normal 20px/20px 'Liberation Sans',sans-serif;color:#201f1e;letter-spacing:0.4px">MILA-000001</div>
<div class="t" style="left:619.5px;top:1477.8px;font:normal 20px/20px 'Liberation Sans',sans-serif;color:#201f1e;">M...</div>
<div class="t" style="left:718.5px;top:1477.5px;font:normal 20.3px/20.3px 'Liberation Sans',sans-serif;color:#201f1e;letter-spacing:0.5px">7/1/2025</div>
<div class="t" style="left:-52.0px;width:1000px;text-align:right;top:1478.3px;font:normal 19.4px/19.4px 'Liberation Sans',sans-serif;color:#201f1e;">5,000.00</div>
<div class="t" style="left:99.5px;width:1000px;text-align:right;top:1478.3px;font:normal 19.4px/19.4px 'Liberation Sans',sans-serif;color:#201f1e;">5,000.00</div>
<div class="t" style="left:325.6px;width:1000px;text-align:right;top:1478.3px;font:normal 19.4px/19.4px 'Liberation Sans',sans-serif;color:#201f1e;">5,000.00</div>
<div class="t" style="left:107.5px;top:1527.0px;font:normal 20.3px/20.3px 'Liberation Sans',sans-serif;color:#201f1e;letter-spacing:0.15px">LN-001541</div>
<div class="t" style="left:277.6px;top:1527.0px;font:normal 20.3px/20.3px 'Liberation Sans',sans-serif;color:#201f1e;letter-spacing:0.5px">9/15/2025</div>
<div class="t" style="left:443.2px;top:1527.3px;font:normal 20px/20px 'Liberation Sans',sans-serif;color:#201f1e;letter-spacing:0.4px">MILA-000001</div>
<div class="t" style="left:619.5px;top:1527.3px;font:normal 20px/20px 'Liberation Sans',sans-serif;color:#201f1e;">M...</div>
<div class="t" style="left:718.5px;top:1527.0px;font:normal 20.3px/20.3px 'Liberation Sans',sans-serif;color:#201f1e;letter-spacing:0.5px">9/15/2025</div>
<div class="t" style="left:-52.0px;width:1000px;text-align:right;top:1527.8px;font:normal 19.4px/19.4px 'Liberation Sans',sans-serif;color:#201f1e;">5,000.00</div>
<div class="t" style="left:99.5px;width:1000px;text-align:right;top:1527.8px;font:normal 19.4px/19.4px 'Liberation Sans',sans-serif;color:#201f1e;">5,000.00</div>
<div class="t" style="left:325.6px;width:1000px;text-align:right;top:1527.8px;font:normal 19.4px/19.4px 'Liberation Sans',sans-serif;color:#201f1e;">5,000.00</div>
<div class="t" style="left:107.5px;top:1576.5px;font:normal 20.3px/20.3px 'Liberation Sans',sans-serif;color:#201f1e;letter-spacing:0.15px">LN-001542</div>
<div class="t" style="left:277.6px;top:1576.5px;font:normal 20.3px/20.3px 'Liberation Sans',sans-serif;color:#201f1e;letter-spacing:0.5px">10/15/2025</div>
<div class="t" style="left:443.2px;top:1576.8px;font:normal 20px/20px 'Liberation Sans',sans-serif;color:#201f1e;letter-spacing:0.4px">MILA-000001</div>
<div class="t" style="left:619.5px;top:1576.8px;font:normal 20px/20px 'Liberation Sans',sans-serif;color:#201f1e;">M...</div>
<div class="t" style="left:718.5px;top:1576.5px;font:normal 20.3px/20.3px 'Liberation Sans',sans-serif;color:#201f1e;letter-spacing:0.5px">10/15/2025</div>
<div class="t" style="left:-52.0px;width:1000px;text-align:right;top:1577.3px;font:normal 19.4px/19.4px 'Liberation Sans',sans-serif;color:#201f1e;">5,000.00</div>
<div class="t" style="left:99.5px;width:1000px;text-align:right;top:1577.3px;font:normal 19.4px/19.4px 'Liberation Sans',sans-serif;color:#201f1e;">5,000.00</div>
<div class="t" style="left:325.6px;width:1000px;text-align:right;top:1577.3px;font:normal 19.4px/19.4px 'Liberation Sans',sans-serif;color:#201f1e;">5,000.00</div>
<div style="left:41.5px;top:330.5px;width:1340px;height:46.5px;background:#ffffff"></div>
<div style="left:41.5px;top:377px;width:1340px;height:1px;background:#d8d6d4"></div>
<div style="left:41.5px;top:378px;width:1340px;height:3px;background:linear-gradient(rgba(0,0,0,0.05),rgba(0,0,0,0))"></div>
<svg style="left:55px;top:337px;" width="32" height="32" viewBox="0 0 32 32"><circle cx="15.5" cy="15.5" r="13.3" fill="none" stroke="#605e5c" stroke-width="1.1"/></svg>
<div class="t" style="left:106.3px;top:345.2px;font:normal 17.4px/17.4px 'Liberation Sans',sans-serif;color:#201f1e;-webkit-text-stroke:0.4px #201f1e">Reference</div>
<div class="t" style="left:275.6px;top:344.7px;font:normal 18px/18px 'Liberation Sans',sans-serif;color:#201f1e;-webkit-text-stroke:0.4px #201f1e">Start date</div>
<div class="t" style="left:441.8px;top:344.7px;font:normal 18px/18px 'Liberation Sans',sans-serif;color:#201f1e;-webkit-text-stroke:0.4px #201f1e">Customer account</div>
<div class="t" style="left:617.3px;top:344.7px;font:normal 18px/18px 'Liberation Sans',sans-serif;color:#201f1e;-webkit-text-stroke:0.4px #201f1e">Ve...</div>
<div class="t" style="left:666.8px;top:344.7px;font:normal 18px/18px 'Liberation Sans',sans-serif;color:#201f1e;-webkit-text-stroke:0.4px #201f1e">La...</div>
<div class="t" style="left:717.0px;top:344.7px;font:normal 18px/18px 'Liberation Sans',sans-serif;color:#201f1e;-webkit-text-stroke:0.4px #201f1e">Last trans...</div>
<svg style="left:821px;top:342px;" width="22" height="20" viewBox="0 0 22 20"><path d="M2.5 2.5 H17.5 L11.5 9.5 V17 L8.5 15.5 V9.5 Z" fill="none" stroke="#605e5c" stroke-width="1.2" stroke-linejoin="round"/></svg>
<div class="t" style="left:860.5px;top:344.7px;font:normal 18px/18px 'Liberation Sans',sans-serif;color:#201f1e;-webkit-text-stroke:0.4px #201f1e">Current ...</div>
<div class="t" style="left:101.7px;width:1000px;text-align:right;top:344.7px;font:normal 18px/18px 'Liberation Sans',sans-serif;color:#201f1e;-webkit-text-stroke:0.4px #201f1e">Capital close</div>
<div class="t" style="left:327.5px;width:1000px;text-align:right;top:344.2px;font:normal 18.6px/18.6px 'Liberation Sans',sans-serif;color:#201f1e;-webkit-text-stroke:0.4px #201f1e">Total outstanding</div>
<div class="t" style="left:1340.0px;top:344.7px;font:normal 18px/18px 'Liberation Sans',sans-serif;color:#201f1e;-webkit-text-stroke:0.4px #201f1e">Outs</div>
<div style="left:101px;top:330.5px;width:1px;height:1370px;background:#edebe9"></div>
<div style="left:102px;top:330.5px;width:5px;height:1370px;background:linear-gradient(90deg,rgba(0,0,0,0.06),rgba(0,0,0,0))"></div>
<div style="left:41px;top:1603.3px;width:1340px;height:5px;background:linear-gradient(rgba(0,0,0,0),rgba(0,0,0,0.07))"></div>
<div style="left:41.5px;top:1608.3px;width:1340px;height:1px;background:#d8d6d4"></div>
<div style="left:41.5px;top:1609.3px;width:1340px;height:113px;background:#ffffff"></div>
<div style="left:101px;top:1609.3px;width:1px;height:90px;background:#edebe9"></div>
<div style="left:102px;top:1609.3px;width:5px;height:89px;background:linear-gradient(90deg,rgba(0,0,0,0.06),rgba(0,0,0,0))"></div>
<div class="t" style="left:328.0px;width:1000px;text-align:right;top:1624.1px;font:normal 19px/19px 'Liberation Sans',sans-serif;color:#605e5c;">Sum</div>
<div class="t" style="left:329.0px;width:1000px;text-align:right;top:1659.1px;font:normal 20.2px/20.2px 'Liberation Sans',sans-serif;color:#201f1e;-webkit-text-stroke:0.35px #201f1e">646,200,464,316.30</div>
<div style="left:100.5px;top:1705.4px;width:869px;height:10.4px;background:#c2c2c2;border-radius:5px"></div>
<div style="left:1381px;top:0px;width:1022px;height:1722px;background:#ffffff"></div>
<div style="left:1381px;top:0px;width:1px;height:1722px;background:#2a6a45"></div>
<div style="left:1382px;top:0px;width:1021px;height:85px;background:#217346"></div>
<div style="left:2071px;top:0px;width:86px;height:85px;background:#1d5c39"></div>
<div style="left:1476px;top:49px;width:76px;height:36px;background:#f1f1f1"></div>
<svg style="left:1412px;top:10px;" width="24" height="24" viewBox="0 0 24 24"><path d="M2 2 H21.5 V21.5 H2 Z" fill="#e8f3ec"/><rect x="4.5" y="3.5" width="14.5" height="8.5" fill="#217346"/><rect x="6.5" y="15" width="10" height="6.5" fill="#217346"/><rect x="8.5" y="16.5" width="2.5" height="5" fill="#e8f3ec"/><rect x="13" y="16.5" width="2" height="5" fill="#e8f3ec"/></svg>
<svg style="left:1452px;top:10px;" width="30" height="26" viewBox="0 0 30 26"><path d="M5 10 H16 A6.5 6.5 0 0 1 16 23" fill="none" stroke="#e8f3ec" stroke-width="2.6"/><path d="M10 3.5 L3.5 10 L10 16.5" fill="none" stroke="#e8f3ec" stroke-width="2.6"/></svg>
<svg style="left:1487px;top:19px;" width="10" height="6" viewBox="0 0 10 6"><path d="M0.5 0.5 H8.5 L4.5 5 Z" fill="#e8f3ec"/></svg>
<svg style="left:1507px;top:10px;" width="30" height="26" viewBox="0 0 30 26"><path d="M25 10 H14 A6.5 6.5 0 0 0 14 23" fill="none" stroke="#5c9a76" stroke-width="2.6"/><path d="M20 3.5 L26.5 10 L20 16.5" fill="none" stroke="#5c9a76" stroke-width="2.6"/></svg>
<svg style="left:1540px;top:19px;" width="10" height="6" viewBox="0 0 10 6"><path d="M0.5 0.5 H8.5 L4.5 5 Z" fill="#5c9a76"/></svg>
<svg style="left:1566px;top:17px;" width="12" height="12" viewBox="0 0 12 12"><rect x="1.5" y="1.5" width="8" height="1.6" fill="#e8f3ec"/><path d="M1.5 5 H9.5 L5.5 9.5 Z" fill="#e8f3ec"/></svg>
<div class="t" style="left:1412.0px;top:58.6px;font:normal 17px/17px 'Liberation Sans',sans-serif;color:#f2f8f4;">File</div>
<div class="t" style="left:1489.0px;top:58.6px;font:normal 17px/17px 'Liberation Sans',sans-serif;color:#217346;">Home</div>
<div class="t" style="left:1566.0px;top:58.6px;font:normal 17px/17px 'Liberation Sans',sans-serif;color:#f2f8f4;">Insert</div>
<div class="t" style="left:1639.0px;top:58.6px;font:normal 17px/17px 'Liberation Sans',sans-serif;color:#f2f8f4;">Page Layout</div>
<div class="t" style="left:1764.0px;top:58.6px;font:normal 17px/17px 'Liberation Sans',sans-serif;color:#f2f8f4;">Formulas</div>
<div class="t" style="left:1866.0px;top:58.6px;font:normal 17px/17px 'Liberation Sans',sans-serif;color:#f2f8f4;">Data</div>
<div class="t" style="left:1932.5px;top:58.6px;font:normal 17px/17px 'Liberation Sans',sans-serif;color:#f2f8f4;">Review</div>
<div class="t" style="left:2015.0px;top:58.6px;font:normal 17px/17px 'Liberation Sans',sans-serif;color:#f2f8f4;">View</div>
<div class="t" style="left:2085.0px;top:58.6px;font:normal 17px/17px 'Liberation Sans',sans-serif;color:#f2f8f4;">Design</div>
<div class="t" style="left:2076.0px;top:18.6px;font:normal 14.6px/14.6px 'Liberation Sans',sans-serif;color:#b7d5c2;">Table Tools</div>
<div class="t" style="left:2171.0px;top:16.6px;font:normal 17px/17px 'Liberation Sans',sans-serif;color:#f4faf6;">LIRLoanInvestDailyBalanceView - Excel</div>
<svg style="left:2170px;top:54px;" width="24" height="28" viewBox="0 0 24 28"><path d="M12 2.5 A8 8 0 0 1 17 17 V20.5 H7 V17 A8 8 0 0 1 12 2.5 Z" fill="none" stroke="#e0eee5" stroke-width="1.5"/><path d="M8 23 H16 M9 25.5 H15" stroke="#e0eee5" stroke-width="1.5"/></svg>
<div class="t" style="left:2197.0px;top:57.8px;font:normal 18px/18px 'Liberation Sans',sans-serif;color:#d8eadf;">Tell me what you want to do</div>
<div style="left:1382px;top:85px;width:1021px;height:131px;background:#f1f1f1"></div>
<div style="left:1382px;top:216px;width:1021px;height:1px;background:#d6d6d6"></div>
<svg style="left:1395px;top:92px;" width="48" height="50" viewBox="0 0 48 50"><rect x="3" y="5" width="33" height="38" rx="2" fill="#e9c27d"/><rect x="9" y="4.5" width="21" height="6.5" fill="#707070"/><rect x="16" y="1" width="7" height="5" rx="1" fill="#707070"/><path d="M21.5 19.5 H38 L43.5 25 V46.5 H21.5 Z" fill="#ffffff" stroke="#8c8c8c" stroke-width="1.2"/></svg>
<div class="t" style="left:1394.0px;top:146.5px;font:normal 16px/16px 'Liberation Sans',sans-serif;color:#444444;">Paste</div>
<svg style="left:1409px;top:172px;" width="12" height="8" viewBox="0 0 12 8"><path d="M1 1 H10 L5.5 6 Z" fill="#555"/></svg>
<svg style="left:1446px;top:93px;" width="26" height="24" viewBox="0 0 26 24"><path d="M6 2 L15 15 M19 2 L10 15" stroke="#6b6b6b" stroke-width="2.4" fill="none"/><circle cx="7" cy="18.5" r="3.6" fill="#dbe8f7" stroke="#5a8ac6" stroke-width="1.5"/><circle cx="18" cy="18.5" r="3.6" fill="#dbe8f7" stroke="#5a8ac6" stroke-width="1.5"/></svg>
<div class="t" style="left:1473.0px;top:97.1px;font:normal 17px/17px 'Liberation Sans',sans-serif;color:#444444;">Cut</div>
<svg style="left:1446px;top:125px;" width="26" height="26" viewBox="0 0 26 26"><path d="M3 2 H10 L13 5 V17 H3 Z M11 8 H18 L21 11 V23 H11 Z" fill="#ffffff" stroke="#6b6b6b" stroke-width="1.1"/><path d="M5 7 H10 M5 10 H10 M5 13 H9 M13 14 H18 M13 17 H18 M13 20 H18" stroke="#6b6b6b" stroke-width="1"/></svg>
<div class="t" style="left:1473.0px;top:130.6px;font:normal 17px/17px 'Liberation Sans',sans-serif;color:#444444;">Copy</div>
<svg style="left:1524px;top:137px;" width="12" height="8" viewBox="0 0 12 8"><path d="M1 1 H10 L5.5 6 Z" fill="#555"/></svg>
<svg style="left:1446px;top:158px;" width="26" height="26" viewBox="0 0 26 26"><path d="M3 18 L9 12 L14 17 L8 23 Z" fill="#e9c27d"/><path d="M11 11 L19 3 L23 7 L15 15 Z" fill="#707070"/></svg>
<div class="t" style="left:1474.0px;top:162.4px;font:normal 17.2px/17.2px 'Liberation Sans',sans-serif;color:#444444;">Format Painter</div>
<div class="t" style="left:1444.0px;top:196.1px;font:normal 15.9px/15.9px 'Liberation Sans',sans-serif;color:#5e5e5e;">Clipboard</div>
<svg style="left:1581px;top:198px;" width="14" height="13" viewBox="0 0 14 13"><path d="M1.5 1.5 H5 M1.5 1.5 V5 M5 5 L11 11 M11 7 V11 H7" fill="none" stroke="#777" stroke-width="1"/></svg>
<div style="left:1600px;top:89px;width:1px;height:122px;background:#d9d9d9"></div>
<div style="left:1605.5px;top:101px;width:133.5px;height:30.5px;background:#ffffff;border:1px solid #c6c6c6;box-sizing:border-box"></div>
<div class="t" style="left:1607.5px;top:108.3px;font:normal 18px/18px 'Liberation Sans',sans-serif;color:#444444;">Calibri</div>
<svg style="left:1725px;top:113px;" width="12" height="8" viewBox="0 0 12 8"><path d="M1 1 H10 L5.5 6 Z" fill="#555"/></svg>
<div style="left:1738.5px;top:101px;width:61.5px;height:30.5px;background:#ffffff;border:1px solid #c6c6c6;box-sizing:border-box"></div>
<div class="t" style="left:1743.0px;top:108.3px;font:normal 18px/18px 'Liberation Sans',sans-serif;color:#444444;">11</div>
<svg style="left:1785px;top:113px;" width="12" height="8" viewBox="0 0 12 8"><path d="M1 1 H10 L5.5 6 Z" fill="#555"/></svg>
<svg style="left:1804px;top:104px;" width="26" height="26" viewBox="0 0 26 26"><path d="M2.5 23 L9.5 4 L16.5 23 M5.5 16 H13.5" fill="none" stroke="#555" stroke-width="2.6"/><path d="M17 6 L20.5 2 L24 6 Z" fill="#4a7ebb"/></svg>
<svg style="left:1834px;top:104px;" width="26" height="26" viewBox="0 0 26 26"><path d="M3.5 23 L9.5 7 L15.5 23 M6 17 H13" fill="none" stroke="#555" stroke-width="2.4"/><path d="M17 3 H24 L20.5 7 Z" fill="#4a7ebb"/></svg>
<div class="t" style="left:1611.5px;top:147.8px;font:bold 21.5px/21.5px 'Liberation Sans',sans-serif;color:#444444;">B</div>
<svg style="left:1641px;top:148px;" width="18" height="20" viewBox="0 0 18 20"><path d="M6.5 2 H15 L14.6 3.6 H12.4 L8.5 16.4 H10.6 L10.2 18 H1.8 L2.2 16.4 H4.6 L8.5 3.6 H6.1 Z" fill="#4a4a4a"/></svg>
<div class="t" style="left:1671.5px;top:147.5px;font:bold 19.5px/19.5px 'Liberation Sans',sans-serif;color:#4a4a4a;">U</div>
<div style="left:1672.5px;top:166.6px;width:14px;height:1.6px;background:#555"></div>
<svg style="left:1696px;top:158px;" width="12" height="8" viewBox="0 0 12 8"><path d="M1 1 H10 L5.5 6 Z" fill="#555"/></svg>
<div style="left:1713px;top:148px;width:1px;height:25px;background:#d9d9d9"></div>
<svg style="left:1721px;top:147px;" width="26" height="24" viewBox="0 0 26 24"><path d="M2 2 H24 V20 H2 Z M13 2 V20 M2 11 H24" fill="none" stroke="#888" stroke-width="1" stroke-dasharray="1.5 1.5"/><path d="M2 21 H24" stroke="#555" stroke-width="1.6"/></svg>
<svg style="left:1751px;top:158px;" width="12" height="8" viewBox="0 0 12 8"><path d="M1 1 H10 L5.5 6 Z" fill="#555"/></svg>
<div style="left:1767px;top:148px;width:1px;height:25px;background:#d9d9d9"></div>
<svg style="left:1774px;top:146px;" width="28" height="26" viewBox="0 0 28 26"><path d="M4 12 L11 5 L18 12 L11 19 Z" fill="#ffffff" stroke="#555" stroke-width="1.4"/><path d="M11 5 V1.5" stroke="#555" stroke-width="1.4"/><path d="M19 11 Q22 14 19 17" fill="none" stroke="#4a7ebb" stroke-width="2"/><rect x="1" y="20" width="23" height="5" fill="#fff" stroke="#888" stroke-width="1"/></svg>
<svg style="left:1802px;top:158px;" width="12" height="8" viewBox="0 0 12 8"><path d="M1 1 H10 L5.5 6 Z" fill="#555"/></svg>
<svg style="left:1818px;top:146px;" width="28" height="28" viewBox="0 0 28 28"><path d="M4 18 L12 2 L20 18 M7 12 H17" fill="none" stroke="#555" stroke-width="2.8"/><rect x="2" y="19" width="24" height="6" fill="#000"/></svg>
<svg style="left:1847px;top:158px;" width="12" height="8" viewBox="0 0 12 8"><path d="M1 1 H10 L5.5 6 Z" fill="#555"/></svg>
<div class="t" style="left:1705.0px;top:196.1px;font:normal 15.9px/15.9px 'Liberation Sans',sans-serif;color:#5e5e5e;">Font</div>
<svg style="left:1847px;top:198px;" width="14" height="13" viewBox="0 0 14 13"><path d="M1.5 1.5 H5 M1.5 1.5 V5 M5 5 L11 11 M11 7 V11 H7" fill="none" stroke="#777" stroke-width="1"/></svg>
<div style="left:1865.5px;top:89px;width:1px;height:122px;background:#d9d9d9"></div>
<div style="left:1930px;top:100px;width:29.5px;height:30px;background:#c6c6c6"></div>
<div style="left:1870px;top:145px;width:30px;height:31px;background:#c6c6c6"></div>
<svg style="left:1860px;top:95px;" width="220" height="85" viewBox="0 0 220 85"><rect x="15.2" y="9.3" width="20.0" height="1.3" fill="#5e5e5e"/><rect x="18.2" y="13.4" width="14.0" height="1.3" fill="#5e5e5e"/><rect x="15.2" y="17.4" width="20.0" height="1.3" fill="#5e5e5e"/><rect x="45.2" y="15.3" width="20.0" height="1.3" fill="#5e5e5e"/><rect x="48.2" y="19.4" width="14.0" height="1.3" fill="#5e5e5e"/><rect x="45.2" y="23.4" width="20.0" height="1.3" fill="#5e5e5e"/><rect x="75.2" y="21.3" width="20.0" height="1.3" fill="#5e5e5e"/><rect x="78.2" y="25.4" width="14.0" height="1.3" fill="#5e5e5e"/><rect x="75.2" y="29.4" width="20.0" height="1.3" fill="#5e5e5e"/><rect x="15.2" y="54.2" width="20.0" height="1.3" fill="#5e5e5e"/><rect x="15.2" y="58.2" width="16.0" height="1.3" fill="#5e5e5e"/><rect x="15.2" y="62.3" width="20.0" height="1.3" fill="#5e5e5e"/><rect x="15.2" y="66.3" width="16.0" height="1.3" fill="#5e5e5e"/><rect x="15.2" y="70.3" width="20.0" height="1.3" fill="#5e5e5e"/><rect x="15.2" y="74.3" width="16.0" height="1.3" fill="#5e5e5e"/><rect x="45.2" y="54.2" width="20.0" height="1.3" fill="#5e5e5e"/><rect x="48.2" y="58.2" width="14.0" height="1.3" fill="#5e5e5e"/><rect x="45.2" y="62.3" width="20.0" height="1.3" fill="#5e5e5e"/><rect x="48.2" y="66.3" width="14.0" height="1.3" fill="#5e5e5e"/><rect x="45.2" y="70.3" width="20.0" height="1.3" fill="#5e5e5e"/><rect x="48.2" y="74.3" width="14.0" height="1.3" fill="#5e5e5e"/><rect x="75.2" y="54.2" width="20.0" height="1.3" fill="#5e5e5e"/><rect x="79.2" y="58.2" width="16.0" height="1.3" fill="#5e5e5e"/><rect x="75.2" y="62.3" width="20.0" height="1.3" fill="#5e5e5e"/><rect x="79.2" y="66.3" width="16.0" height="1.3" fill="#5e5e5e"/><rect x="75.2" y="70.3" width="20.0" height="1.3" fill="#5e5e5e"/><rect x="79.2" y="74.3" width="16.0" height="1.3" fill="#5e5e5e"/><rect x="113.5" y="54.2" width="22.0" height="1.3" fill="#5e5e5e"/><rect x="124.5" y="58.2" width="11.0" height="1.3" fill="#5e5e5e"/><rect x="124.5" y="62.3" width="11.0" height="1.3" fill="#5e5e5e"/><rect x="124.5" y="66.3" width="11.0" height="1.3" fill="#5e5e5e"/><rect x="124.5" y="70.3" width="11.0" height="1.3" fill="#5e5e5e"/><rect x="113.5" y="74.3" width="22.0" height="1.3" fill="#5e5e5e"/><path d="M113.5 64.5 L118.5 59.5 V62.6 H122.5 V66.4 H118.5 V69.5 Z" fill="#4a7ebb"/><rect x="143.5" y="54.2" width="22.0" height="1.3" fill="#5e5e5e"/><rect x="154.5" y="58.2" width="11.0" height="1.3" fill="#5e5e5e"/><rect x="154.5" y="62.3" width="11.0" height="1.3" fill="#5e5e5e"/><rect x="154.5" y="66.3" width="11.0" height="1.3" fill="#5e5e5e"/><rect x="154.5" y="70.3" width="11.0" height="1.3" fill="#5e5e5e"/><rect x="143.5" y="74.3" width="22.0" height="1.3" fill="#5e5e5e"/><path d="M153.5 64.5 L148.5 59.5 V62.6 H143.5 V66.4 H148.5 V69.5 Z" fill="#4a7ebb"/><rect x="104" y="10" width="1" height="22" fill="#d9d9d9"/><rect x="104" y="55" width="1" height="22" fill="#d9d9d9"/><text x="121.5" y="22.5" text-anchor="middle" font-family="Liberation Sans" font-size="14" fill="#555" transform="rotate(-50 121.5 18)">ab</text><path d="M124.5 29.5 L135 19 M130 18.5 H135.5 V24" fill="none" stroke="#555" stroke-width="1.3"/><path d="M141 17 H149 L145 21 Z" fill="#666"/></svg>
<div style="left:2034.5px;top:105px;width:1px;height:85px;background:#d9d9d9"></div>
<svg style="left:2041px;top:101px;" width="30" height="32" viewBox="0 0 30 32"><path d="M3.5 4.5 H17.5 V11.5 H3.5 Z M3.5 15.5 H17.5 V28.5 H3.5 Z" fill="#fff" stroke="#666" stroke-width="1.1"/><path d="M6 8 H22 M6 19.5 H15 M6 24 H15" stroke="#5b7fa8" stroke-width="1.1"/><path d="M21.5 10.5 Q26 11.5 24.5 17 Q23 21 18.5 20.5" fill="none" stroke="#4a7ebb" stroke-width="2"/><path d="M21 17.5 L18 20.5 L21 23.5" fill="none" stroke="#4a7ebb" stroke-width="1.8"/></svg>
<div class="t" style="left:2069.0px;top:107.9px;font:normal 17.4px/17.4px 'Liberation Sans',sans-serif;color:#444444;">Wrap Text</div>
<svg style="left:2041px;top:147px;" width="28" height="26" viewBox="0 0 28 26"><path d="M2 2 H24 V23 H2 Z M2 7.5 H24 M2 17.5 H24 M13 2 V7.5 M13 17.5 V23" fill="none" stroke="#aaa" stroke-width="1"/><path d="M5 12.5 H21 M8 10 L5 12.5 L8 15 M18 10 L21 12.5 L18 15" fill="none" stroke="#aaa" stroke-width="1.1"/></svg>
<div class="t" style="left:2069.5px;top:151.0px;font:normal 17.7px/17.7px 'Liberation Sans',sans-serif;color:#9a9a9a;">Merge &amp; Center</div>
<svg style="left:2204px;top:157px;" width="12" height="8" viewBox="0 0 12 8"><path d="M1 1 H10 L5.5 6 Z" fill="#aaa"/></svg>
<div class="t" style="left:1995.0px;top:196.1px;font:normal 15.9px/15.9px 'Liberation Sans',sans-serif;color:#5e5e5e;">Alignment</div>
<svg style="left:2204px;top:198px;" width="14" height="13" viewBox="0 0 14 13"><path d="M1.5 1.5 H5 M1.5 1.5 V5 M5 5 L11 11 M11 7 V11 H7" fill="none" stroke="#777" stroke-width="1"/></svg>
<div style="left:2222px;top:89px;width:1px;height:122px;background:#d9d9d9"></div>
<div style="left:2227.5px;top:101.4px;width:173px;height:30px;background:#ffffff;border:1px solid #c6c6c6;box-sizing:border-box"></div>
<div class="t" style="left:2230.5px;top:108.2px;font:normal 18px/18px 'Liberation Sans',sans-serif;color:#444444;">Text</div>
<svg style="left:2386px;top:112px;" width="12" height="8" viewBox="0 0 12 8"><path d="M1 1 H10 L5.5 6 Z" fill="#555"/></svg>
<div class="t" style="left:2235.0px;top:148.2px;font:normal 21px/21px 'Liberation Sans',sans-serif;color:#555555;">$</div>
<svg style="left:2258px;top:157px;" width="12" height="8" viewBox="0 0 12 8"><path d="M1 1 H10 L5.5 6 Z" fill="#555"/></svg>
<div class="t" style="left:2274.5px;top:148.2px;font:normal 21px/21px 'Liberation Sans',sans-serif;color:#555555;">%</div>
<svg style="left:2308px;top:149px;" width="16" height="18" viewBox="0 0 16 18"><circle cx="8.5" cy="6.5" r="4.3" fill="#555"/><path d="M12.6 7 Q12.5 13 5.5 16 L5 14.5 Q9 12 8.8 9 Z" fill="#555"/></svg>
<div style="left:2335px;top:150px;width:1px;height:21px;background:#d9d9d9"></div>
<div class="t" style="left:2354.0px;top:148.8px;font:bold 12px/12px 'Liberation Sans',sans-serif;color:#555555;">.0</div>
<div class="t" style="left:2345.0px;top:158.8px;font:bold 12px/12px 'Liberation Sans',sans-serif;color:#555555;">.00</div>
<svg style="left:2343px;top:151px;" width="10" height="8" viewBox="0 0 10 8"><path d="M1 4 L5 0.5 V7.5 Z M4 3.2 H9 V4.8 H4 Z" fill="#4a7ebb"/></svg>
<div class="t" style="left:2378.0px;top:148.8px;font:bold 12px/12px 'Liberation Sans',sans-serif;color:#555555;">.00</div>
<div class="t" style="left:2387.0px;top:158.8px;font:bold 12px/12px 'Liberation Sans',sans-serif;color:#555555;">.0</div>
<svg style="left:2377px;top:161px;" width="10" height="8" viewBox="0 0 10 8"><path d="M9 4 L5 0.5 V7.5 Z M1 3.2 H6 V4.8 H1 Z" fill="#4a7ebb"/></svg>
<div class="t" style="left:2272.5px;top:196.1px;font:normal 15.9px/15.9px 'Liberation Sans',sans-serif;color:#5e5e5e;">Number</div>
<svg style="left:2387px;top:198px;" width="14" height="13" viewBox="0 0 14 13"><path d="M1.5 1.5 H5 M1.5 1.5 V5 M5 5 L11 11 M11 7 V11 H7" fill="none" stroke="#777" stroke-width="1"/></svg>
<div style="left:1382px;top:217px;width:1021px;height:65px;background:#e6e6e6"></div>
<div style="left:1389.6px;top:232.8px;width:151px;height:33.7px;background:#ffffff;border:1px solid #c6c6c6;box-sizing:border-box"></div>
<div class="t" style="left:1396.0px;top:240.9px;font:normal 18.6px/18.6px 'Liberation Sans',sans-serif;color:#444444;">B1275</div>
<svg style="left:1521px;top:248px;" width="12" height="8" viewBox="0 0 12 8"><path d="M1 1 H10 L5.5 6 Z" fill="#666"/></svg>
<div style="left:1560.5px;top:241px;width:3px;height:3px;background:#9a9a9a"></div>
<div style="left:1560.5px;top:247px;width:3px;height:3px;background:#9a9a9a"></div>
<div style="left:1560.5px;top:253px;width:3px;height:3px;background:#9a9a9a"></div>
<div style="left:1586px;top:232.8px;width:164px;height:33.7px;background:#ffffff;border:1px solid #c6c6c6;box-sizing:border-box"></div>
<svg style="left:1603px;top:240px;" width="22" height="20" viewBox="0 0 22 20"><path d="M3 2.5 L18 17.5 M18 2.5 L3 17.5" stroke="#b5b5b5" stroke-width="2"/></svg>
<svg style="left:1656px;top:240px;" width="26" height="20" viewBox="0 0 26 20"><path d="M2.5 10 L9 16.5 L22 3" fill="none" stroke="#c2c2c2" stroke-width="2.6"/></svg>
<div class="t" style="left:1712.0px;top:237.4px;font:bold 22px/22px 'Liberation Serif',sans-serif;color:#666666;font-style:italic">f</div>
<div class="t" style="left:1720.5px;top:243.3px;font:bold 15px/15px 'Liberation Serif',sans-serif;color:#666666;font-style:italic">x</div>
<div style="left:1754px;top:232.8px;width:660px;height:33.7px;background:#ffffff;border:1px solid #c6c6c6;box-sizing:border-box"></div>
<div class="t" style="left:1771.0px;top:240.5px;font:normal 19px/19px 'Liberation Sans',sans-serif;color:#444444;">LN-001520</div>
<div style="left:1382px;top:282px;width:1021px;height:28px;background:#e6e6e6"></div>
<div style="left:1491.3px;top:282px;width:143.1px;height:26.5px;background:#d2d2d2"></div>
<div style="left:1491.3px;top:308.5px;width:143.1px;height:2px;background:#217346"></div>
<div style="left:1382px;top:309.5px;width:110px;height:1px;background:#ababab"></div>
<div style="left:1634.4px;top:309.5px;width:770px;height:1px;background:#ababab"></div>
<div style="left:1435px;top:284px;width:1px;height:26px;background:#c4c4c4"></div>
<div style="left:1491.3px;top:284px;width:1px;height:26px;background:#c4c4c4"></div>
<div style="left:1634.4px;top:284px;width:1px;height:26px;background:#c4c4c4"></div>
<div style="left:1808.4px;top:284px;width:1px;height:26px;background:#c4c4c4"></div>
<div style="left:1932.2px;top:284px;width:1px;height:26px;background:#c4c4c4"></div>
<div style="left:1936px;top:284px;width:1px;height:26px;background:#c4c4c4"></div>
<div style="left:2121.3px;top:284px;width:1px;height:26px;background:#c4c4c4"></div>
<div style="left:2352.4px;top:284px;width:1px;height:26px;background:#c4c4c4"></div>
<svg style="left:1409px;top:285px;" width="26" height="24" viewBox="0 0 26 24"><path d="M23 2 V21.5 H3 Z" fill="#b3b3b3"/></svg>
<div class="t" style="left:963.2px;width:1000px;text-align:center;top:289.2px;font:normal 18px/18px 'Liberation Sans',sans-serif;color:#222222;">A</div>
<div class="t" style="left:1062.8px;width:1000px;text-align:center;top:289.2px;font:normal 18px/18px 'Liberation Sans',sans-serif;color:#217346;">B</div>
<div class="t" style="left:1221.4px;width:1000px;text-align:center;top:289.2px;font:normal 18px/18px 'Liberation Sans',sans-serif;color:#222222;">C</div>
<div class="t" style="left:1370.3px;width:1000px;text-align:center;top:289.2px;font:normal 18px/18px 'Liberation Sans',sans-serif;color:#222222;">D</div>
<div class="t" style="left:1528.7px;width:1000px;text-align:center;top:289.2px;font:normal 18px/18px 'Liberation Sans',sans-serif;color:#222222;">I</div>
<div class="t" style="left:1736.9px;width:1000px;text-align:center;top:289.2px;font:normal 18px/18px 'Liberation Sans',sans-serif;color:#222222;">J</div>
<div style="left:1382px;top:310.5px;width:54px;height:1412px;background:#e6e6e6"></div>
<div style="left:1435px;top:310.5px;width:1px;height:1412px;background:#ababab"></div>
<div style="left:1436px;top:310.5px;width:970px;height:1412px;background:#ffffff"></div>
<div style="left:1491.3px;top:339.4px;width:1px;height:1400px;background:#d4d4d4"></div>
<div style="left:1634.4px;top:339.4px;width:1px;height:1400px;background:#d4d4d4"></div>
<div style="left:1808.4px;top:339.4px;width:1px;height:1400px;background:#d4d4d4"></div>
<div style="left:1934px;top:339.4px;width:1px;height:1400px;background:#d4d4d4"></div>
<div style="left:2121.3px;top:339.4px;width:1px;height:1400px;background:#d4d4d4"></div>
<div style="left:2352.4px;top:339.4px;width:1px;height:1400px;background:#d4d4d4"></div>
<div style="left:1436px;top:310.5px;width:970px;height:29px;background:#5b9bd5"></div>
<div style="left:2121.3px;top:310.5px;width:231.1px;height:29px;background:#ffff00"></div>
<div style="left:1436px;top:338.6px;width:970px;height:1.2px;background:#86a9cf"></div>
<div style="left:1436px;top:309.8px;width:970px;height:1.2px;background:#7d9cbc"></div>
<div style="left:1436.5px;top:310.5px;width:29.5px;height:28.5px;overflow:hidden"><div class="t" style="left:2.0px;top:5.9px;font:bold 19px/19px 'Liberation Sans',sans-serif;color:#ffffff">Ob</div></div>
<div style="left:1492.5px;top:310.5px;width:116.5px;height:28.5px;overflow:hidden"><div class="t" style="left:2.0px;top:5.9px;font:bold 19px/19px 'Liberation Sans',sans-serif;color:#ffffff">Reference</div></div>
<div style="left:1635.3px;top:310.5px;width:147.7px;height:28.5px;overflow:hidden"><div class="t" style="left:2.0px;top:5.9px;font:bold 19px/19px 'Liberation Sans',sans-serif;color:#ffffff">Start date</div></div>
<div style="left:1809.5px;top:310.5px;width:98.5px;height:28.5px;overflow:hidden"><div class="t" style="left:2.0px;top:5.9px;font:bold 19px/19px 'Liberation Sans',sans-serif;color:#ffffff">Customer account</div></div>
<div style="left:1935.5px;top:310.5px;width:159.5px;height:28.5px;overflow:hidden"><div class="t" style="left:2.0px;top:5.9px;font:bold 19px/19px 'Liberation Sans',sans-serif;color:#ffffff">Capital close</div></div>
<div style="left:2122.2px;top:310.5px;width:203.8px;height:28.5px;overflow:hidden"><div class="t" style="left:2.0px;top:5.9px;font:bold 19px/19px 'Liberation Sans',sans-serif;color:#000000">Total outstanding</div></div>
<div style="left:2353.2px;top:310.5px;width:66.8px;height:28.5px;overflow:hidden"><div class="t" style="left:2.0px;top:5.9px;font:bold 19px/19px 'Liberation Sans',sans-serif;color:#ffffff">Outstanding</div></div>
<div style="left:1467px;top:314px;width:23px;height:23.5px;background:#ffffff;border:1px solid #d0d0d0;box-sizing:border-box"></div>
<svg style="left:1473px;top:322px;" width="12" height="8" viewBox="0 0 12 8"><path d="M0.5 0.5 H10.5 L5.5 6 Z" fill="#5a5a5a"/></svg>
<div style="left:1610px;top:314px;width:23px;height:23.5px;background:#ffffff;border:1px solid #d0d0d0;box-sizing:border-box"></div>
<svg style="left:1616px;top:322px;" width="12" height="8" viewBox="0 0 12 8"><path d="M0.5 0.5 H10.5 L5.5 6 Z" fill="#5a5a5a"/></svg>
<div style="left:1784px;top:314px;width:23px;height:23.5px;background:#ffffff;border:1px solid #d0d0d0;box-sizing:border-box"></div>
<svg style="left:1790px;top:322px;" width="12" height="8" viewBox="0 0 12 8"><path d="M0.5 0.5 H10.5 L5.5 6 Z" fill="#5a5a5a"/></svg>
<div style="left:1909.5px;top:314px;width:23px;height:23.5px;background:#ffffff;border:1px solid #d0d0d0;box-sizing:border-box"></div>
<svg style="left:1915.5px;top:322px;" width="12" height="8" viewBox="0 0 12 8"><path d="M0.5 0.5 H10.5 L5.5 6 Z" fill="#5a5a5a"/></svg>
<div style="left:2096.5px;top:314px;width:23px;height:23.5px;background:#ffffff;border:1px solid #d0d0d0;box-sizing:border-box"></div>
<svg style="left:2102.5px;top:322px;" width="12" height="8" viewBox="0 0 12 8"><path d="M0.5 0.5 H10.5 L5.5 6 Z" fill="#5a5a5a"/></svg>
<div style="left:2327.5px;top:314px;width:23px;height:23.5px;background:#ffffff;border:1px solid #d0d0d0;box-sizing:border-box"></div>
<svg style="left:2333.5px;top:322px;" width="12" height="8" viewBox="0 0 12 8"><path d="M0.5 0.5 H10.5 L5.5 6 Z" fill="#5a5a5a"/></svg>
<div style="left:1436px;top:368.4px;width:970px;height:29px;background:#ddebf7"></div>
<div style="left:1436px;top:426.4px;width:970px;height:29px;background:#ddebf7"></div>
<div style="left:1436px;top:484.4px;width:970px;height:29px;background:#ddebf7"></div>
<div style="left:1436px;top:542.4px;width:970px;height:29px;background:#ddebf7"></div>
<div style="left:1436px;top:600.4px;width:970px;height:29px;background:#ddebf7"></div>
<div style="left:1436px;top:658.4px;width:970px;height:29px;background:#ddebf7"></div>
<div style="left:1436px;top:716.4px;width:970px;height:29px;background:#ddebf7"></div>
<div style="left:1436px;top:774.4px;width:970px;height:29px;background:#ddebf7"></div>
<div style="left:1436px;top:832.4px;width:970px;height:29px;background:#ddebf7"></div>
<div style="left:1436px;top:890.4px;width:970px;height:29px;background:#ddebf7"></div>
<div style="left:1436px;top:948.4px;width:970px;height:29px;background:#ddebf7"></div>
<div style="left:1436px;top:1006.4px;width:970px;height:29px;background:#ddebf7"></div>
<div style="left:1436px;top:1064.4px;width:970px;height:29px;background:#ddebf7"></div>
<div style="left:1436px;top:1122.4px;width:970px;height:29px;background:#ddebf7"></div>
<div style="left:1436px;top:1180.4px;width:970px;height:29px;background:#ddebf7"></div>
<div style="left:1436px;top:1238.4px;width:970px;height:29px;background:#ddebf7"></div>
<div style="left:1436px;top:1296.4px;width:970px;height:29px;background:#ddebf7"></div>
<div style="left:1436px;top:1354.4px;width:970px;height:29px;background:#ddebf7"></div>
<div style="left:1436px;top:367.9px;width:970px;height:1px;background:#9bc2e6"></div>
<div style="left:1436px;top:396.9px;width:970px;height:1px;background:#9bc2e6"></div>
<div style="left:1436px;top:425.9px;width:970px;height:1px;background:#9bc2e6"></div>
<div style="left:1436px;top:454.9px;width:970px;height:1px;background:#9bc2e6"></div>
<div style="left:1436px;top:483.9px;width:970px;height:1px;background:#9bc2e6"></div>
<div style="left:1436px;top:512.9px;width:970px;height:1px;background:#9bc2e6"></div>
<div style="left:1436px;top:541.9px;width:970px;height:1px;background:#9bc2e6"></div>
<div style="left:1436px;top:570.9px;width:970px;height:1px;background:#9bc2e6"></div>
<div style="left:1436px;top:599.9px;width:970px;height:1px;background:#9bc2e6"></div>
<div style="left:1436px;top:628.9px;width:970px;height:1px;background:#9bc2e6"></div>
<div style="left:1436px;top:657.9px;width:970px;height:1px;background:#9bc2e6"></div>
<div style="left:1436px;top:686.9px;width:970px;height:1px;background:#9bc2e6"></div>
<div style="left:1436px;top:715.9px;width:970px;height:1px;background:#9bc2e6"></div>
<div style="left:1436px;top:744.9px;width:970px;height:1px;background:#9bc2e6"></div>
<div style="left:1436px;top:773.9px;width:970px;height:1px;background:#9bc2e6"></div>
<div style="left:1436px;top:802.9px;width:970px;height:1px;background:#9bc2e6"></div>
<div style="left:1436px;top:831.9px;width:970px;height:1px;background:#9bc2e6"></div>
<div style="left:1436px;top:860.9px;width:970px;height:1px;background:#9bc2e6"></div>
<div style="left:1436px;top:889.9px;width:970px;height:1px;background:#9bc2e6"></div>
<div style="left:1436px;top:918.9px;width:970px;height:1px;background:#9bc2e6"></div>
<div style="left:1436px;top:947.9px;width:970px;height:1px;background:#9bc2e6"></div>
<div style="left:1436px;top:976.9px;width:970px;height:1px;background:#9bc2e6"></div>
<div style="left:1436px;top:1005.9px;width:970px;height:1px;background:#9bc2e6"></div>
<div style="left:1436px;top:1034.9px;width:970px;height:1px;background:#9bc2e6"></div>
<div style="left:1436px;top:1063.9px;width:970px;height:1px;background:#9bc2e6"></div>
<div style="left:1436px;top:1092.9px;width:970px;height:1px;background:#9bc2e6"></div>
<div style="left:1436px;top:1121.9px;width:970px;height:1px;background:#9bc2e6"></div>
<div style="left:1436px;top:1150.9px;width:970px;height:1px;background:#9bc2e6"></div>
<div style="left:1436px;top:1179.9px;width:970px;height:1px;background:#9bc2e6"></div>
<div style="left:1436px;top:1208.9px;width:970px;height:1px;background:#9bc2e6"></div>
<div style="left:1436px;top:1237.9px;width:970px;height:1px;background:#9bc2e6"></div>
<div style="left:1436px;top:1266.9px;width:970px;height:1px;background:#9bc2e6"></div>
<div style="left:1436px;top:1295.9px;width:970px;height:1px;background:#9bc2e6"></div>
<div style="left:1436px;top:1324.9px;width:970px;height:1px;background:#9bc2e6"></div>
<div style="left:1436px;top:1353.9px;width:970px;height:1px;background:#9bc2e6"></div>
<div style="left:1436px;top:1382.9px;width:970px;height:1px;background:#9bc2e6"></div>
<div style="left:1436px;top:1411.9px;width:970px;height:1px;background:#9bc2e6"></div>
<div style="left:1436px;top:1411.4px;width:970px;height:1.5px;background:#7fa7cf"></div>
<div style="left:1436px;top:1440.9px;width:970px;height:1px;background:#b7cde3"></div>
<div style="left:1436px;top:1469.9px;width:970px;height:1px;background:#d4d4d4"></div>
<div style="left:1436px;top:1498.9px;width:970px;height:1px;background:#d4d4d4"></div>
<div style="left:1436px;top:1527.9px;width:970px;height:1px;background:#d4d4d4"></div>
<div style="left:1436px;top:1556.9px;width:970px;height:1px;background:#d4d4d4"></div>
<div style="left:1436px;top:1585.9px;width:970px;height:1px;background:#d4d4d4"></div>
<div style="left:1436px;top:1614.9px;width:970px;height:1px;background:#d4d4d4"></div>
<div style="left:1436px;top:1643.9px;width:970px;height:1px;background:#d4d4d4"></div>
<div style="left:1436px;top:1672.9px;width:970px;height:1px;background:#d4d4d4"></div>
<div style="left:1436px;top:1701.9px;width:970px;height:1px;background:#d4d4d4"></div>
<div style="left:1436px;top:1730.9px;width:970px;height:1px;background:#d4d4d4"></div>
<div style="left:1436px;top:1759.9px;width:970px;height:1px;background:#d4d4d4"></div>
<div style="left:1382px;top:339px;width:53px;height:1px;background:#c6c6c6"></div>
<div class="t" style="left:909.0px;width:1000px;text-align:center;top:316.4px;font:normal 19px/19px 'Liberation Sans',sans-serif;color:#222222;">1</div>
<div style="left:1382px;top:367.9px;width:53px;height:1px;background:#c6c6c6"></div>
<div class="t" style="left:909.0px;width:1000px;text-align:center;top:345.6px;font:normal 19px/19px 'Liberation Sans',sans-serif;color:#222222;">1269</div>
<div style="left:1382px;top:396.9px;width:53px;height:1px;background:#c6c6c6"></div>
<div class="t" style="left:909.0px;width:1000px;text-align:center;top:374.6px;font:normal 19px/19px 'Liberation Sans',sans-serif;color:#222222;">1270</div>
<div style="left:1382px;top:425.9px;width:53px;height:1px;background:#c6c6c6"></div>
<div class="t" style="left:909.0px;width:1000px;text-align:center;top:403.6px;font:normal 19px/19px 'Liberation Sans',sans-serif;color:#222222;">1271</div>
<div style="left:1382px;top:454.9px;width:53px;height:1px;background:#c6c6c6"></div>
<div class="t" style="left:909.0px;width:1000px;text-align:center;top:432.6px;font:normal 19px/19px 'Liberation Sans',sans-serif;color:#222222;">1272</div>
<div style="left:1382px;top:483.9px;width:53px;height:1px;background:#c6c6c6"></div>
<div class="t" style="left:909.0px;width:1000px;text-align:center;top:461.6px;font:normal 19px/19px 'Liberation Sans',sans-serif;color:#222222;">1273</div>
<div style="left:1382px;top:512.9px;width:53px;height:1px;background:#c6c6c6"></div>
<div class="t" style="left:909.0px;width:1000px;text-align:center;top:490.6px;font:normal 19px/19px 'Liberation Sans',sans-serif;color:#222222;">1274</div>
<div style="left:1382px;top:513.4px;width:53px;height:29px;background:#d2d2d2"></div>
<div style="left:1433.5px;top:513.4px;width:2px;height:29px;background:#217346"></div>
<div style="left:1382px;top:541.9px;width:53px;height:1px;background:#c6c6c6"></div>
<div class="t" style="left:909.0px;width:1000px;text-align:center;top:519.6px;font:normal 19px/19px 'Liberation Sans',sans-serif;color:#217346;">1275</div>
<div style="left:1382px;top:570.9px;width:53px;height:1px;background:#c6c6c6"></div>
<div class="t" style="left:909.0px;width:1000px;text-align:center;top:548.6px;font:normal 19px/19px 'Liberation Sans',sans-serif;color:#222222;">1276</div>
<div style="left:1382px;top:599.9px;width:53px;height:1px;background:#c6c6c6"></div>
<div class="t" style="left:909.0px;width:1000px;text-align:center;top:577.6px;font:normal 19px/19px 'Liberation Sans',sans-serif;color:#222222;">1277</div>
<div style="left:1382px;top:628.9px;width:53px;height:1px;background:#c6c6c6"></div>
<div class="t" style="left:909.0px;width:1000px;text-align:center;top:606.6px;font:normal 19px/19px 'Liberation Sans',sans-serif;color:#222222;">1278</div>
<div style="left:1382px;top:657.9px;width:53px;height:1px;background:#c6c6c6"></div>
<div class="t" style="left:909.0px;width:1000px;text-align:center;top:635.6px;font:normal 19px/19px 'Liberation Sans',sans-serif;color:#222222;">1279</div>
<div style="left:1382px;top:686.9px;width:53px;height:1px;background:#c6c6c6"></div>
<div class="t" style="left:909.0px;width:1000px;text-align:center;top:664.6px;font:normal 19px/19px 'Liberation Sans',sans-serif;color:#222222;">1280</div>
<div style="left:1382px;top:715.9px;width:53px;height:1px;background:#c6c6c6"></div>
<div class="t" style="left:909.0px;width:1000px;text-align:center;top:693.6px;font:normal 19px/19px 'Liberation Sans',sans-serif;color:#222222;">1281</div>
<div style="left:1382px;top:744.9px;width:53px;height:1px;background:#c6c6c6"></div>
<div class="t" style="left:909.0px;width:1000px;text-align:center;top:722.6px;font:normal 19px/19px 'Liberation Sans',sans-serif;color:#222222;">1282</div>
<div style="left:1382px;top:773.9px;width:53px;height:1px;background:#c6c6c6"></div>
<div class="t" style="left:909.0px;width:1000px;text-align:center;top:751.6px;font:normal 19px/19px 'Liberation Sans',sans-serif;color:#222222;">1283</div>
<div style="left:1382px;top:802.9px;width:53px;height:1px;background:#c6c6c6"></div>
<div class="t" style="left:909.0px;width:1000px;text-align:center;top:780.6px;font:normal 19px/19px 'Liberation Sans',sans-serif;color:#222222;">1284</div>
<div style="left:1382px;top:831.9px;width:53px;height:1px;background:#c6c6c6"></div>
<div class="t" style="left:909.0px;width:1000px;text-align:center;top:809.6px;font:normal 19px/19px 'Liberation Sans',sans-serif;color:#222222;">1285</div>
<div style="left:1382px;top:860.9px;width:53px;height:1px;background:#c6c6c6"></div>
<div class="t" style="left:909.0px;width:1000px;text-align:center;top:838.6px;font:normal 19px/19px 'Liberation Sans',sans-serif;color:#222222;">1286</div>
<div style="left:1382px;top:889.9px;width:53px;height:1px;background:#c6c6c6"></div>
<div class="t" style="left:909.0px;width:1000px;text-align:center;top:867.6px;font:normal 19px/19px 'Liberation Sans',sans-serif;color:#222222;">1287</div>
<div style="left:1382px;top:918.9px;width:53px;height:1px;background:#c6c6c6"></div>
<div class="t" style="left:909.0px;width:1000px;text-align:center;top:896.6px;font:normal 19px/19px 'Liberation Sans',sans-serif;color:#222222;">1288</div>
<div style="left:1382px;top:947.9px;width:53px;height:1px;background:#c6c6c6"></div>
<div class="t" style="left:909.0px;width:1000px;text-align:center;top:925.6px;font:normal 19px/19px 'Liberation Sans',sans-serif;color:#222222;">1289</div>
<div style="left:1382px;top:976.9px;width:53px;height:1px;background:#c6c6c6"></div>
<div class="t" style="left:909.0px;width:1000px;text-align:center;top:954.6px;font:normal 19px/19px 'Liberation Sans',sans-serif;color:#222222;">1290</div>
<div style="left:1382px;top:1005.9px;width:53px;height:1px;background:#c6c6c6"></div>
<div class="t" style="left:909.0px;width:1000px;text-align:center;top:983.6px;font:normal 19px/19px 'Liberation Sans',sans-serif;color:#222222;">1291</div>
<div style="left:1382px;top:1034.9px;width:53px;height:1px;background:#c6c6c6"></div>
<div class="t" style="left:909.0px;width:1000px;text-align:center;top:1012.6px;font:normal 19px/19px 'Liberation Sans',sans-serif;color:#222222;">1292</div>
<div style="left:1382px;top:1063.9px;width:53px;height:1px;background:#c6c6c6"></div>
<div class="t" style="left:909.0px;width:1000px;text-align:center;top:1041.6px;font:normal 19px/19px 'Liberation Sans',sans-serif;color:#222222;">1293</div>
<div style="left:1382px;top:1092.9px;width:53px;height:1px;background:#c6c6c6"></div>
<div class="t" style="left:909.0px;width:1000px;text-align:center;top:1070.6px;font:normal 19px/19px 'Liberation Sans',sans-serif;color:#222222;">1294</div>
<div style="left:1382px;top:1121.9px;width:53px;height:1px;background:#c6c6c6"></div>
<div class="t" style="left:909.0px;width:1000px;text-align:center;top:1099.6px;font:normal 19px/19px 'Liberation Sans',sans-serif;color:#222222;">1295</div>
<div style="left:1382px;top:1150.9px;width:53px;height:1px;background:#c6c6c6"></div>
<div class="t" style="left:909.0px;width:1000px;text-align:center;top:1128.6px;font:normal 19px/19px 'Liberation Sans',sans-serif;color:#222222;">1296</div>
<div style="left:1382px;top:1179.9px;width:53px;height:1px;background:#c6c6c6"></div>
<div class="t" style="left:909.0px;width:1000px;text-align:center;top:1157.6px;font:normal 19px/19px 'Liberation Sans',sans-serif;color:#222222;">1297</div>
<div style="left:1382px;top:1208.9px;width:53px;height:1px;background:#c6c6c6"></div>
<div class="t" style="left:909.0px;width:1000px;text-align:center;top:1186.6px;font:normal 19px/19px 'Liberation Sans',sans-serif;color:#222222;">1298</div>
<div style="left:1382px;top:1237.9px;width:53px;height:1px;background:#c6c6c6"></div>
<div class="t" style="left:909.0px;width:1000px;text-align:center;top:1215.6px;font:normal 19px/19px 'Liberation Sans',sans-serif;color:#222222;">1299</div>
<div style="left:1382px;top:1266.9px;width:53px;height:1px;background:#c6c6c6"></div>
<div class="t" style="left:909.0px;width:1000px;text-align:center;top:1244.6px;font:normal 19px/19px 'Liberation Sans',sans-serif;color:#222222;">1300</div>
<div style="left:1382px;top:1295.9px;width:53px;height:1px;background:#c6c6c6"></div>
<div class="t" style="left:909.0px;width:1000px;text-align:center;top:1273.6px;font:normal 19px/19px 'Liberation Sans',sans-serif;color:#222222;">1301</div>
<div style="left:1382px;top:1324.9px;width:53px;height:1px;background:#c6c6c6"></div>
<div class="t" style="left:909.0px;width:1000px;text-align:center;top:1302.6px;font:normal 19px/19px 'Liberation Sans',sans-serif;color:#222222;">1302</div>
<div style="left:1382px;top:1353.9px;width:53px;height:1px;background:#c6c6c6"></div>
<div class="t" style="left:909.0px;width:1000px;text-align:center;top:1331.6px;font:normal 19px/19px 'Liberation Sans',sans-serif;color:#222222;">1303</div>
<div style="left:1382px;top:1382.9px;width:53px;height:1px;background:#c6c6c6"></div>
<div class="t" style="left:909.0px;width:1000px;text-align:center;top:1360.6px;font:normal 19px/19px 'Liberation Sans',sans-serif;color:#222222;">1304</div>
<div style="left:1382px;top:1411.9px;width:53px;height:1px;background:#c6c6c6"></div>
<div class="t" style="left:909.0px;width:1000px;text-align:center;top:1389.6px;font:normal 19px/19px 'Liberation Sans',sans-serif;color:#222222;">1305</div>
<div style="left:1382px;top:1440.9px;width:53px;height:1px;background:#c6c6c6"></div>
<div class="t" style="left:909.0px;width:1000px;text-align:center;top:1418.6px;font:normal 19px/19px 'Liberation Sans',sans-serif;color:#222222;">1306</div>
<div style="left:1382px;top:1469.9px;width:53px;height:1px;background:#c6c6c6"></div>
<div class="t" style="left:909.0px;width:1000px;text-align:center;top:1447.6px;font:normal 19px/19px 'Liberation Sans',sans-serif;color:#222222;">1307</div>
<div style="left:1382px;top:1498.9px;width:53px;height:1px;background:#c6c6c6"></div>
<div class="t" style="left:909.0px;width:1000px;text-align:center;top:1476.6px;font:normal 19px/19px 'Liberation Sans',sans-serif;color:#222222;">1308</div>
<div style="left:1382px;top:1527.9px;width:53px;height:1px;background:#c6c6c6"></div>
<div class="t" style="left:909.0px;width:1000px;text-align:center;top:1505.6px;font:normal 19px/19px 'Liberation Sans',sans-serif;color:#222222;">1309</div>
<div style="left:1382px;top:1556.9px;width:53px;height:1px;background:#c6c6c6"></div>
<div class="t" style="left:909.0px;width:1000px;text-align:center;top:1534.6px;font:normal 19px/19px 'Liberation Sans',sans-serif;color:#222222;">1310</div>
<div style="left:1382px;top:1585.9px;width:53px;height:1px;background:#c6c6c6"></div>
<div class="t" style="left:909.0px;width:1000px;text-align:center;top:1563.6px;font:normal 19px/19px 'Liberation Sans',sans-serif;color:#222222;">1311</div>
<div style="left:1382px;top:1614.9px;width:53px;height:1px;background:#c6c6c6"></div>
<div class="t" style="left:909.0px;width:1000px;text-align:center;top:1592.6px;font:normal 19px/19px 'Liberation Sans',sans-serif;color:#222222;">1312</div>
<div style="left:1382px;top:1643.9px;width:53px;height:1px;background:#c6c6c6"></div>
<div class="t" style="left:909.0px;width:1000px;text-align:center;top:1621.6px;font:normal 19px/19px 'Liberation Sans',sans-serif;color:#222222;">1313</div>
<div style="left:1382px;top:1672.9px;width:53px;height:1px;background:#c6c6c6"></div>
<div class="t" style="left:909.0px;width:1000px;text-align:center;top:1650.6px;font:normal 19px/19px 'Liberation Sans',sans-serif;color:#222222;">1314</div>
<div style="left:1382px;top:1701.9px;width:53px;height:1px;background:#c6c6c6"></div>
<div class="t" style="left:909.0px;width:1000px;text-align:center;top:1679.6px;font:normal 19px/19px 'Liberation Sans',sans-serif;color:#222222;">1315</div>
<div style="left:1382px;top:1730.9px;width:53px;height:1px;background:#c6c6c6"></div>
<div class="t" style="left:909.0px;width:1000px;text-align:center;top:1708.6px;font:normal 19px/19px 'Liberation Sans',sans-serif;color:#222222;">1316</div>
<div style="left:1382px;top:1759.9px;width:53px;height:1px;background:#c6c6c6"></div>
<div class="t" style="left:909.0px;width:1000px;text-align:center;top:1737.6px;font:normal 19px/19px 'Liberation Sans',sans-serif;color:#222222;">1317</div>
<div class="t" style="left:1438.5px;top:345.6px;font:normal 19px/19px 'Liberation Sans',sans-serif;color:#000;">Loans</div>
<div class="t" style="left:1494.6px;top:345.5px;font:normal 19.1px/19.1px 'Liberation Sans',sans-serif;color:#000;">LN-001514</div>
<div class="t" style="left:1638.6px;top:345.5px;font:normal 19.1px/19.1px 'Liberation Sans',sans-serif;color:#000;letter-spacing:1.1px">8/1/2025</div>
<div style="left:1809.4px;top:339.4px;width:124.1px;height:28.0px;overflow:hidden"><div class="t" style="left:2.5px;top:6.1px;font:normal 19.1px/19.1px 'Liberation Sans',sans-serif;color:#000">MILN_000154</div></div>
<div class="t" style="left:1937.3px;top:345.2px;font:normal 19.5px/19.5px 'Liberation Sans',sans-serif;color:#000;letter-spacing:0.35px">5,000.00</div>
<div class="t" style="left:2124.1px;top:345.2px;font:normal 19.5px/19.5px 'Liberation Sans',sans-serif;color:#000;letter-spacing:0.35px">4,607.00</div>
<div class="t" style="left:2355.1px;top:345.2px;font:normal 19.5px/19.5px 'Liberation Sans',sans-serif;color:#000;letter-spacing:0.35px">0.00</div>
<div class="t" style="left:1438.5px;top:374.6px;font:normal 19px/19px 'Liberation Sans',sans-serif;color:#000;">Loans</div>
<div class="t" style="left:1494.6px;top:374.5px;font:normal 19.1px/19.1px 'Liberation Sans',sans-serif;color:#000;">LN-001515</div>
<div class="t" style="left:1638.6px;top:374.5px;font:normal 19.1px/19.1px 'Liberation Sans',sans-serif;color:#000;letter-spacing:1.1px">9/1/2025</div>
<div style="left:1809.4px;top:368.4px;width:124.1px;height:28.0px;overflow:hidden"><div class="t" style="left:2.5px;top:6.1px;font:normal 19.1px/19.1px 'Liberation Sans',sans-serif;color:#000">MILN_000155</div></div>
<div class="t" style="left:1937.3px;top:374.2px;font:normal 19.5px/19.5px 'Liberation Sans',sans-serif;color:#000;letter-spacing:0.35px">5,000.00</div>
<div class="t" style="left:2124.1px;top:374.2px;font:normal 19.5px/19.5px 'Liberation Sans',sans-serif;color:#000;letter-spacing:0.35px">4,785.00</div>
<div class="t" style="left:2355.1px;top:374.2px;font:normal 19.5px/19.5px 'Liberation Sans',sans-serif;color:#000;letter-spacing:0.35px">34.62</div>
<div class="t" style="left:1438.5px;top:403.6px;font:normal 19px/19px 'Liberation Sans',sans-serif;color:#000;">Loans</div>
<div class="t" style="left:1494.6px;top:403.5px;font:normal 19.1px/19.1px 'Liberation Sans',sans-serif;color:#000;">LN-001516</div>
<div class="t" style="left:1638.6px;top:403.5px;font:normal 19.1px/19.1px 'Liberation Sans',sans-serif;color:#000;letter-spacing:1.1px">9/1/2025</div>
<div style="left:1809.4px;top:397.4px;width:124.1px;height:28.0px;overflow:hidden"><div class="t" style="left:2.5px;top:6.1px;font:normal 19.1px/19.1px 'Liberation Sans',sans-serif;color:#000">MILN_000156</div></div>
<div class="t" style="left:1937.3px;top:403.2px;font:normal 19.5px/19.5px 'Liberation Sans',sans-serif;color:#000;letter-spacing:0.35px">5,000.00</div>
<div class="t" style="left:2124.1px;top:403.2px;font:normal 19.5px/19.5px 'Liberation Sans',sans-serif;color:#000;letter-spacing:0.35px">3,750.00</div>
<div class="t" style="left:2355.1px;top:403.2px;font:normal 19.5px/19.5px 'Liberation Sans',sans-serif;color:#000;letter-spacing:0.35px">0.00</div>
<div class="t" style="left:1438.5px;top:432.6px;font:normal 19px/19px 'Liberation Sans',sans-serif;color:#000;">Loans</div>
<div class="t" style="left:1494.6px;top:432.5px;font:normal 19.1px/19.1px 'Liberation Sans',sans-serif;color:#000;">LN-001517</div>
<div class="t" style="left:1638.6px;top:432.5px;font:normal 19.1px/19.1px 'Liberation Sans',sans-serif;color:#000;letter-spacing:1.1px">10/6/2025</div>
<div style="left:1809.4px;top:426.4px;width:124.1px;height:28.0px;overflow:hidden"><div class="t" style="left:2.5px;top:6.1px;font:normal 19.1px/19.1px 'Liberation Sans',sans-serif;color:#000">MILN_000157</div></div>
<div class="t" style="left:1937.3px;top:432.2px;font:normal 19.5px/19.5px 'Liberation Sans',sans-serif;color:#000;letter-spacing:0.35px">5,000.00</div>
<div class="t" style="left:2124.1px;top:432.2px;font:normal 19.5px/19.5px 'Liberation Sans',sans-serif;color:#000;letter-spacing:0.35px">3,750.00</div>
<div class="t" style="left:2355.1px;top:432.2px;font:normal 19.5px/19.5px 'Liberation Sans',sans-serif;color:#000;letter-spacing:0.35px">0.00</div>
<div class="t" style="left:1438.5px;top:461.6px;font:normal 19px/19px 'Liberation Sans',sans-serif;color:#000;">Loans</div>
<div class="t" style="left:1494.6px;top:461.5px;font:normal 19.1px/19.1px 'Liberation Sans',sans-serif;color:#000;">LN-001518</div>
<div class="t" style="left:1638.6px;top:461.5px;font:normal 19.1px/19.1px 'Liberation Sans',sans-serif;color:#000;letter-spacing:1.1px">10/1/2025</div>
<div style="left:1809.4px;top:455.4px;width:124.1px;height:28.0px;overflow:hidden"><div class="t" style="left:2.5px;top:6.1px;font:normal 19.1px/19.1px 'Liberation Sans',sans-serif;color:#000">MILN_000158</div></div>
<div class="t" style="left:1937.3px;top:461.2px;font:normal 19.5px/19.5px 'Liberation Sans',sans-serif;color:#000;letter-spacing:0.35px">5,000.00</div>
<div class="t" style="left:2124.1px;top:461.2px;font:normal 19.5px/19.5px 'Liberation Sans',sans-serif;color:#000;letter-spacing:0.35px">4,750.00</div>
<div class="t" style="left:2355.1px;top:461.2px;font:normal 19.5px/19.5px 'Liberation Sans',sans-serif;color:#000;letter-spacing:0.35px">0.00</div>
<div class="t" style="left:1438.5px;top:490.6px;font:normal 19px/19px 'Liberation Sans',sans-serif;color:#000;">Loans</div>
<div class="t" style="left:1494.6px;top:490.5px;font:normal 19.1px/19.1px 'Liberation Sans',sans-serif;color:#000;">LN-001519</div>
<div class="t" style="left:1638.6px;top:490.5px;font:normal 19.1px/19.1px 'Liberation Sans',sans-serif;color:#000;letter-spacing:1.1px">3/1/2025</div>
<div style="left:1809.4px;top:484.4px;width:124.1px;height:28.0px;overflow:hidden"><div class="t" style="left:2.5px;top:6.1px;font:normal 19.1px/19.1px 'Liberation Sans',sans-serif;color:#000">MILN_000159</div></div>
<div class="t" style="left:1937.3px;top:490.2px;font:normal 19.5px/19.5px 'Liberation Sans',sans-serif;color:#000;letter-spacing:0.35px">5,000.00</div>
<div class="t" style="left:2124.1px;top:490.2px;font:normal 19.5px/19.5px 'Liberation Sans',sans-serif;color:#000;letter-spacing:0.35px">5,201.00</div>
<div class="t" style="left:2355.1px;top:490.2px;font:normal 19.5px/19.5px 'Liberation Sans',sans-serif;color:#000;letter-spacing:0.35px">551.30</div>
<div class="t" style="left:1438.5px;top:519.6px;font:normal 19px/19px 'Liberation Sans',sans-serif;color:#000;">Loans</div>
<div class="t" style="left:1494.6px;top:519.5px;font:normal 19.1px/19.1px 'Liberation Sans',sans-serif;color:#000;">LN-001520</div>
<div class="t" style="left:1638.6px;top:519.5px;font:normal 19.1px/19.1px 'Liberation Sans',sans-serif;color:#000;letter-spacing:1.1px">9/30/2025</div>
<div style="left:1809.4px;top:513.4px;width:124.1px;height:28.0px;overflow:hidden"><div class="t" style="left:2.5px;top:6.1px;font:normal 19.1px/19.1px 'Liberation Sans',sans-serif;color:#000">MILN_000160</div></div>
<div class="t" style="left:1937.3px;top:519.2px;font:normal 19.5px/19.5px 'Liberation Sans',sans-serif;color:#000;letter-spacing:0.35px">5,000.00</div>
<div class="t" style="left:2124.1px;top:519.2px;font:normal 19.5px/19.5px 'Liberation Sans',sans-serif;color:#000;letter-spacing:0.35px">4,750.00</div>
<div class="t" style="left:2355.1px;top:519.2px;font:normal 19.5px/19.5px 'Liberation Sans',sans-serif;color:#000;letter-spacing:0.35px">0.00</div>
<div class="t" style="left:1438.5px;top:548.6px;font:normal 19px/19px 'Liberation Sans',sans-serif;color:#000;">Loans</div>
<div class="t" style="left:1494.6px;top:548.5px;font:normal 19.1px/19.1px 'Liberation Sans',sans-serif;color:#000;">LN-001522</div>
<div class="t" style="left:1638.6px;top:548.5px;font:normal 19.1px/19.1px 'Liberation Sans',sans-serif;color:#000;letter-spacing:1.1px">9/1/2025</div>
<div style="left:1809.4px;top:542.4px;width:124.1px;height:28.0px;overflow:hidden"><div class="t" style="left:2.5px;top:6.1px;font:normal 19.1px/19.1px 'Liberation Sans',sans-serif;color:#000">MILA-000001</div></div>
<div class="t" style="left:1937.3px;top:548.2px;font:normal 19.5px/19.5px 'Liberation Sans',sans-serif;color:#000;letter-spacing:0.35px">5,000.00</div>
<div class="t" style="left:2124.1px;top:548.2px;font:normal 19.5px/19.5px 'Liberation Sans',sans-serif;color:#000;letter-spacing:0.35px">5,000.00</div>
<div class="t" style="left:2355.1px;top:548.2px;font:normal 19.5px/19.5px 'Liberation Sans',sans-serif;color:#000;letter-spacing:0.35px">0.00</div>
<div class="t" style="left:1438.5px;top:577.6px;font:normal 19px/19px 'Liberation Sans',sans-serif;color:#000;">Loans</div>
<div class="t" style="left:1494.6px;top:577.5px;font:normal 19.1px/19.1px 'Liberation Sans',sans-serif;color:#000;">LN-001523</div>
<div class="t" style="left:1638.6px;top:577.5px;font:normal 19.1px/19.1px 'Liberation Sans',sans-serif;color:#000;letter-spacing:1.1px">5/1/2025</div>
<div style="left:1809.4px;top:571.4px;width:124.1px;height:28.0px;overflow:hidden"><div class="t" style="left:2.5px;top:6.1px;font:normal 19.1px/19.1px 'Liberation Sans',sans-serif;color:#000">MILA-000002</div></div>
<div class="t" style="left:1937.3px;top:577.2px;font:normal 19.5px/19.5px 'Liberation Sans',sans-serif;color:#000;letter-spacing:0.35px">5,000.00</div>
<div class="t" style="left:2124.1px;top:577.2px;font:normal 19.5px/19.5px 'Liberation Sans',sans-serif;color:#000;letter-spacing:0.35px">5,000.00</div>
<div class="t" style="left:2355.1px;top:577.2px;font:normal 19.5px/19.5px 'Liberation Sans',sans-serif;color:#000;letter-spacing:0.35px">0.00</div>
<div class="t" style="left:1438.5px;top:606.6px;font:normal 19px/19px 'Liberation Sans',sans-serif;color:#000;">Loans</div>
<div class="t" style="left:1494.6px;top:606.5px;font:normal 19.1px/19.1px 'Liberation Sans',sans-serif;color:#000;">LN-001524</div>
<div class="t" style="left:1638.6px;top:606.5px;font:normal 19.1px/19.1px 'Liberation Sans',sans-serif;color:#000;letter-spacing:1.1px">5/1/2025</div>
<div style="left:1809.4px;top:600.4px;width:124.1px;height:28.0px;overflow:hidden"><div class="t" style="left:2.5px;top:6.1px;font:normal 19.1px/19.1px 'Liberation Sans',sans-serif;color:#000">MILA-000002</div></div>
<div class="t" style="left:1937.3px;top:606.2px;font:normal 19.5px/19.5px 'Liberation Sans',sans-serif;color:#000;letter-spacing:0.35px">5,000.00</div>
<div class="t" style="left:2124.1px;top:606.2px;font:normal 19.5px/19.5px 'Liberation Sans',sans-serif;color:#000;letter-spacing:0.35px">5,000.00</div>
<div class="t" style="left:2355.1px;top:606.2px;font:normal 19.5px/19.5px 'Liberation Sans',sans-serif;color:#000;letter-spacing:0.35px">0.00</div>
<div class="t" style="left:1438.5px;top:635.6px;font:normal 19px/19px 'Liberation Sans',sans-serif;color:#000;">Loans</div>
<div class="t" style="left:1494.6px;top:635.5px;font:normal 19.1px/19.1px 'Liberation Sans',sans-serif;color:#000;">LN-001525</div>
<div class="t" style="left:1638.6px;top:635.5px;font:normal 19.1px/19.1px 'Liberation Sans',sans-serif;color:#000;letter-spacing:1.1px">4/15/2025</div>
<div style="left:1809.4px;top:629.4px;width:124.1px;height:28.0px;overflow:hidden"><div class="t" style="left:2.5px;top:6.1px;font:normal 19.1px/19.1px 'Liberation Sans',sans-serif;color:#000">MILA-000001</div></div>
<div class="t" style="left:1937.3px;top:635.2px;font:normal 19.5px/19.5px 'Liberation Sans',sans-serif;color:#000;letter-spacing:0.35px">5,000.00</div>
<div class="t" style="left:2124.1px;top:635.2px;font:normal 19.5px/19.5px 'Liberation Sans',sans-serif;color:#000;letter-spacing:0.35px">5,000.00</div>
<div class="t" style="left:2355.1px;top:635.2px;font:normal 19.5px/19.5px 'Liberation Sans',sans-serif;color:#000;letter-spacing:0.35px">0.00</div>
<div class="t" style="left:1438.5px;top:664.6px;font:normal 19px/19px 'Liberation Sans',sans-serif;color:#000;">Loans</div>
<div class="t" style="left:1494.6px;top:664.5px;font:normal 19.1px/19.1px 'Liberation Sans',sans-serif;color:#000;">LN-001526</div>
<div class="t" style="left:1638.6px;top:664.5px;font:normal 19.1px/19.1px 'Liberation Sans',sans-serif;color:#000;letter-spacing:1.1px">4/15/2025</div>
<div style="left:1809.4px;top:658.4px;width:124.1px;height:28.0px;overflow:hidden"><div class="t" style="left:2.5px;top:6.1px;font:normal 19.1px/19.1px 'Liberation Sans',sans-serif;color:#000">MILA-000001</div></div>
<div class="t" style="left:1937.3px;top:664.2px;font:normal 19.5px/19.5px 'Liberation Sans',sans-serif;color:#000;letter-spacing:0.35px">5,000.00</div>
<div class="t" style="left:2124.1px;top:664.2px;font:normal 19.5px/19.5px 'Liberation Sans',sans-serif;color:#000;letter-spacing:0.35px">5,000.00</div>
<div class="t" style="left:2355.1px;top:664.2px;font:normal 19.5px/19.5px 'Liberation Sans',sans-serif;color:#000;letter-spacing:0.35px">0.00</div>
<div class="t" style="left:1438.5px;top:693.6px;font:normal 19px/19px 'Liberation Sans',sans-serif;color:#000;">Loans</div>
<div class="t" style="left:1494.6px;top:693.5px;font:normal 19.1px/19.1px 'Liberation Sans',sans-serif;color:#000;">LN-001527</div>
<div class="t" style="left:1638.6px;top:693.5px;font:normal 19.1px/19.1px 'Liberation Sans',sans-serif;color:#000;letter-spacing:1.1px">4/15/2025</div>
<div style="left:1809.4px;top:687.4px;width:124.1px;height:28.0px;overflow:hidden"><div class="t" style="left:2.5px;top:6.1px;font:normal 19.1px/19.1px 'Liberation Sans',sans-serif;color:#000">MILA-000001</div></div>
<div class="t" style="left:1937.3px;top:693.2px;font:normal 19.5px/19.5px 'Liberation Sans',sans-serif;color:#000;letter-spacing:0.35px">5,000.00</div>
<div class="t" style="left:2124.1px;top:693.2px;font:normal 19.5px/19.5px 'Liberation Sans',sans-serif;color:#000;letter-spacing:0.35px">5,000.00</div>
<div class="t" style="left:2355.1px;top:693.2px;font:normal 19.5px/19.5px 'Liberation Sans',sans-serif;color:#000;letter-spacing:0.35px">0.00</div>
<div class="t" style="left:1438.5px;top:722.6px;font:normal 19px/19px 'Liberation Sans',sans-serif;color:#000;">Loans</div>
<div class="t" style="left:1494.6px;top:722.5px;font:normal 19.1px/19.1px 'Liberation Sans',sans-serif;color:#000;">LN-001528</div>
<div class="t" style="left:1638.6px;top:722.5px;font:normal 19.1px/19.1px 'Liberation Sans',sans-serif;color:#000;letter-spacing:1.1px">4/15/2025</div>
<div style="left:1809.4px;top:716.4px;width:124.1px;height:28.0px;overflow:hidden"><div class="t" style="left:2.5px;top:6.1px;font:normal 19.1px/19.1px 'Liberation Sans',sans-serif;color:#000">MILA-000001</div></div>
<div class="t" style="left:1937.3px;top:722.2px;font:normal 19.5px/19.5px 'Liberation Sans',sans-serif;color:#000;letter-spacing:0.35px">5,000.00</div>
<div class="t" style="left:2124.1px;top:722.2px;font:normal 19.5px/19.5px 'Liberation Sans',sans-serif;color:#000;letter-spacing:0.35px">5,000.00</div>
<div class="t" style="left:2355.1px;top:722.2px;font:normal 19.5px/19.5px 'Liberation Sans',sans-serif;color:#000;letter-spacing:0.35px">0.00</div>
<div class="t" style="left:1438.5px;top:751.6px;font:normal 19px/19px 'Liberation Sans',sans-serif;color:#000;">Loans</div>
<div class="t" style="left:1494.6px;top:751.5px;font:normal 19.1px/19.1px 'Liberation Sans',sans-serif;color:#000;">LN-001529</div>
<div class="t" style="left:1638.6px;top:751.5px;font:normal 19.1px/19.1px 'Liberation Sans',sans-serif;color:#000;letter-spacing:1.1px">7/1/2025</div>
<div style="left:1809.4px;top:745.4px;width:124.1px;height:28.0px;overflow:hidden"><div class="t" style="left:2.5px;top:6.1px;font:normal 19.1px/19.1px 'Liberation Sans',sans-serif;color:#000">MILA-000001</div></div>
<div class="t" style="left:1937.3px;top:751.2px;font:normal 19.5px/19.5px 'Liberation Sans',sans-serif;color:#000;letter-spacing:0.35px">5,000.00</div>
<div class="t" style="left:2124.1px;top:751.2px;font:normal 19.5px/19.5px 'Liberation Sans',sans-serif;color:#000;letter-spacing:0.35px">5,000.00</div>
<div class="t" style="left:2355.1px;top:751.2px;font:normal 19.5px/19.5px 'Liberation Sans',sans-serif;color:#000;letter-spacing:0.35px">0.00</div>
<div class="t" style="left:1438.5px;top:780.6px;font:normal 19px/19px 'Liberation Sans',sans-serif;color:#000;">Loans</div>
<div class="t" style="left:1494.6px;top:780.5px;font:normal 19.1px/19.1px 'Liberation Sans',sans-serif;color:#000;">LN-001530</div>
<div class="t" style="left:1638.6px;top:780.5px;font:normal 19.1px/19.1px 'Liberation Sans',sans-serif;color:#000;letter-spacing:1.1px">7/1/2025</div>
<div style="left:1809.4px;top:774.4px;width:124.1px;height:28.0px;overflow:hidden"><div class="t" style="left:2.5px;top:6.1px;font:normal 19.1px/19.1px 'Liberation Sans',sans-serif;color:#000">MILA-000001</div></div>
<div class="t" style="left:1937.3px;top:780.2px;font:normal 19.5px/19.5px 'Liberation Sans',sans-serif;color:#000;letter-spacing:0.35px">5,000.00</div>
<div class="t" style="left:2124.1px;top:780.2px;font:normal 19.5px/19.5px 'Liberation Sans',sans-serif;color:#000;letter-spacing:0.35px">5,000.00</div>
<div class="t" style="left:2355.1px;top:780.2px;font:normal 19.5px/19.5px 'Liberation Sans',sans-serif;color:#000;letter-spacing:0.35px">0.00</div>
<div class="t" style="left:1438.5px;top:809.6px;font:normal 19px/19px 'Liberation Sans',sans-serif;color:#000;">Loans</div>
<div class="t" style="left:1494.6px;top:809.5px;font:normal 19.1px/19.1px 'Liberation Sans',sans-serif;color:#000;">LN-001531</div>
<div class="t" style="left:1638.6px;top:809.5px;font:normal 19.1px/19.1px 'Liberation Sans',sans-serif;color:#000;letter-spacing:1.1px">7/1/2025</div>
<div style="left:1809.4px;top:803.4px;width:124.1px;height:28.0px;overflow:hidden"><div class="t" style="left:2.5px;top:6.1px;font:normal 19.1px/19.1px 'Liberation Sans',sans-serif;color:#000">MILA-000001</div></div>
<div class="t" style="left:1937.3px;top:809.2px;font:normal 19.5px/19.5px 'Liberation Sans',sans-serif;color:#000;letter-spacing:0.35px">10,000.00</div>
<div class="t" style="left:2124.1px;top:809.2px;font:normal 19.5px/19.5px 'Liberation Sans',sans-serif;color:#000;letter-spacing:0.35px">10,000.00</div>
<div class="t" style="left:2355.1px;top:809.2px;font:normal 19.5px/19.5px 'Liberation Sans',sans-serif;color:#000;letter-spacing:0.35px">0.00</div>
<div class="t" style="left:1438.5px;top:838.6px;font:normal 19px/19px 'Liberation Sans',sans-serif;color:#000;">Loans</div>
<div class="t" style="left:1494.6px;top:838.5px;font:normal 19.1px/19.1px 'Liberation Sans',sans-serif;color:#000;">LN-001532</div>
<div class="t" style="left:1638.6px;top:838.5px;font:normal 19.1px/19.1px 'Liberation Sans',sans-serif;color:#000;letter-spacing:1.1px">7/1/2025</div>
<div style="left:1809.4px;top:832.4px;width:124.1px;height:28.0px;overflow:hidden"><div class="t" style="left:2.5px;top:6.1px;font:normal 19.1px/19.1px 'Liberation Sans',sans-serif;color:#000">MILA-000001</div></div>
<div class="t" style="left:1937.3px;top:838.2px;font:normal 19.5px/19.5px 'Liberation Sans',sans-serif;color:#000;letter-spacing:0.35px">5,000.00</div>
<div class="t" style="left:2124.1px;top:838.2px;font:normal 19.5px/19.5px 'Liberation Sans',sans-serif;color:#000;letter-spacing:0.35px">5,000.00</div>
<div class="t" style="left:2355.1px;top:838.2px;font:normal 19.5px/19.5px 'Liberation Sans',sans-serif;color:#000;letter-spacing:0.35px">0.00</div>
<div class="t" style="left:1438.5px;top:867.6px;font:normal 19px/19px 'Liberation Sans',sans-serif;color:#000;">Loans</div>
<div class="t" style="left:1494.6px;top:867.5px;font:normal 19.1px/19.1px 'Liberation Sans',sans-serif;color:#000;">LN-001533</div>
<div class="t" style="left:1638.6px;top:867.5px;font:normal 19.1px/19.1px 'Liberation Sans',sans-serif;color:#000;letter-spacing:1.1px">7/1/2025</div>
<div style="left:1809.4px;top:861.4px;width:124.1px;height:28.0px;overflow:hidden"><div class="t" style="left:2.5px;top:6.1px;font:normal 19.1px/19.1px 'Liberation Sans',sans-serif;color:#000">MILA-000001</div></div>
<div class="t" style="left:1937.3px;top:867.2px;font:normal 19.5px/19.5px 'Liberation Sans',sans-serif;color:#000;letter-spacing:0.35px">5,000.00</div>
<div class="t" style="left:2124.1px;top:867.2px;font:normal 19.5px/19.5px 'Liberation Sans',sans-serif;color:#000;letter-spacing:0.35px">5,000.00</div>
<div class="t" style="left:2355.1px;top:867.2px;font:normal 19.5px/19.5px 'Liberation Sans',sans-serif;color:#000;letter-spacing:0.35px">0.00</div>
<div class="t" style="left:1438.5px;top:896.6px;font:normal 19px/19px 'Liberation Sans',sans-serif;color:#000;">Loans</div>
<div class="t" style="left:1494.6px;top:896.5px;font:normal 19.1px/19.1px 'Liberation Sans',sans-serif;color:#000;">LN-001534</div>
<div class="t" style="left:1638.6px;top:896.5px;font:normal 19.1px/19.1px 'Liberation Sans',sans-serif;color:#000;letter-spacing:1.1px">7/1/2025</div>
<div style="left:1809.4px;top:890.4px;width:124.1px;height:28.0px;overflow:hidden"><div class="t" style="left:2.5px;top:6.1px;font:normal 19.1px/19.1px 'Liberation Sans',sans-serif;color:#000">MILA-000001</div></div>
<div class="t" style="left:1937.3px;top:896.2px;font:normal 19.5px/19.5px 'Liberation Sans',sans-serif;color:#000;letter-spacing:0.35px">5,000.00</div>
<div class="t" style="left:2124.1px;top:896.2px;font:normal 19.5px/19.5px 'Liberation Sans',sans-serif;color:#000;letter-spacing:0.35px">5,000.00</div>
<div class="t" style="left:2355.1px;top:896.2px;font:normal 19.5px/19.5px 'Liberation Sans',sans-serif;color:#000;letter-spacing:0.35px">0.00</div>
<div class="t" style="left:1438.5px;top:925.6px;font:normal 19px/19px 'Liberation Sans',sans-serif;color:#000;">Loans</div>
<div class="t" style="left:1494.6px;top:925.5px;font:normal 19.1px/19.1px 'Liberation Sans',sans-serif;color:#000;">LN-001535</div>
<div class="t" style="left:1638.6px;top:925.5px;font:normal 19.1px/19.1px 'Liberation Sans',sans-serif;color:#000;letter-spacing:1.1px">7/1/2025</div>
<div style="left:1809.4px;top:919.4px;width:124.1px;height:28.0px;overflow:hidden"><div class="t" style="left:2.5px;top:6.1px;font:normal 19.1px/19.1px 'Liberation Sans',sans-serif;color:#000">MILA-000001</div></div>
<div class="t" style="left:1937.3px;top:925.2px;font:normal 19.5px/19.5px 'Liberation Sans',sans-serif;color:#000;letter-spacing:0.35px">10,000.00</div>
<div class="t" style="left:2124.1px;top:925.2px;font:normal 19.5px/19.5px 'Liberation Sans',sans-serif;color:#000;letter-spacing:0.35px">10,000.00</div>
<div class="t" style="left:2355.1px;top:925.2px;font:normal 19.5px/19.5px 'Liberation Sans',sans-serif;color:#000;letter-spacing:0.35px">0.00</div>
<div class="t" style="left:1438.5px;top:954.6px;font:normal 19px/19px 'Liberation Sans',sans-serif;color:#000;">Loans</div>
<div class="t" style="left:1494.6px;top:954.5px;font:normal 19.1px/19.1px 'Liberation Sans',sans-serif;color:#000;">LN-001536</div>
<div class="t" style="left:1638.6px;top:954.5px;font:normal 19.1px/19.1px 'Liberation Sans',sans-serif;color:#000;letter-spacing:1.1px">7/1/2025</div>
<div style="left:1809.4px;top:948.4px;width:124.1px;height:28.0px;overflow:hidden"><div class="t" style="left:2.5px;top:6.1px;font:normal 19.1px/19.1px 'Liberation Sans',sans-serif;color:#000">MILA-000001</div></div>
<div class="t" style="left:1937.3px;top:954.2px;font:normal 19.5px/19.5px 'Liberation Sans',sans-serif;color:#000;letter-spacing:0.35px">5,000.00</div>
<div class="t" style="left:2124.1px;top:954.2px;font:normal 19.5px/19.5px 'Liberation Sans',sans-serif;color:#000;letter-spacing:0.35px">5,000.00</div>
<div class="t" style="left:2355.1px;top:954.2px;font:normal 19.5px/19.5px 'Liberation Sans',sans-serif;color:#000;letter-spacing:0.35px">0.00</div>
<div class="t" style="left:1438.5px;top:983.6px;font:normal 19px/19px 'Liberation Sans',sans-serif;color:#000;">Loans</div>
<div class="t" style="left:1494.6px;top:983.5px;font:normal 19.1px/19.1px 'Liberation Sans',sans-serif;color:#000;">LN-001537</div>
<div class="t" style="left:1638.6px;top:983.5px;font:normal 19.1px/19.1px 'Liberation Sans',sans-serif;color:#000;letter-spacing:1.1px">7/1/2025</div>
<div style="left:1809.4px;top:977.4px;width:124.1px;height:28.0px;overflow:hidden"><div class="t" style="left:2.5px;top:6.1px;font:normal 19.1px/19.1px 'Liberation Sans',sans-serif;color:#000">MILA-000001</div></div>
<div class="t" style="left:1937.3px;top:983.2px;font:normal 19.5px/19.5px 'Liberation Sans',sans-serif;color:#000;letter-spacing:0.35px">10,000.00</div>
<div class="t" style="left:2124.1px;top:983.2px;font:normal 19.5px/19.5px 'Liberation Sans',sans-serif;color:#000;letter-spacing:0.35px">0.00</div>
<div class="t" style="left:2355.1px;top:983.2px;font:normal 19.5px/19.5px 'Liberation Sans',sans-serif;color:#000;letter-spacing:0.35px">0.00</div>
<div class="t" style="left:1438.5px;top:1012.6px;font:normal 19px/19px 'Liberation Sans',sans-serif;color:#000;">Loans</div>
<div class="t" style="left:1494.6px;top:1012.5px;font:normal 19.1px/19.1px 'Liberation Sans',sans-serif;color:#000;">LN-001538</div>
<div class="t" style="left:1638.6px;top:1012.5px;font:normal 19.1px/19.1px 'Liberation Sans',sans-serif;color:#000;letter-spacing:1.1px">7/1/2025</div>
<div style="left:1809.4px;top:1006.4px;width:124.1px;height:28.0px;overflow:hidden"><div class="t" style="left:2.5px;top:6.1px;font:normal 19.1px/19.1px 'Liberation Sans',sans-serif;color:#000">MILA-000001</div></div>
<div class="t" style="left:1937.3px;top:1012.2px;font:normal 19.5px/19.5px 'Liberation Sans',sans-serif;color:#000;letter-spacing:0.35px">5,000.00</div>
<div class="t" style="left:2124.1px;top:1012.2px;font:normal 19.5px/19.5px 'Liberation Sans',sans-serif;color:#000;letter-spacing:0.35px">5,000.00</div>
<div class="t" style="left:2355.1px;top:1012.2px;font:normal 19.5px/19.5px 'Liberation Sans',sans-serif;color:#000;letter-spacing:0.35px">0.00</div>
<div class="t" style="left:1438.5px;top:1041.6px;font:normal 19px/19px 'Liberation Sans',sans-serif;color:#000;">Loans</div>
<div class="t" style="left:1494.6px;top:1041.5px;font:normal 19.1px/19.1px 'Liberation Sans',sans-serif;color:#000;">LN-001539</div>
<div class="t" style="left:1638.6px;top:1041.5px;font:normal 19.1px/19.1px 'Liberation Sans',sans-serif;color:#000;letter-spacing:1.1px">7/1/2025</div>
<div style="left:1809.4px;top:1035.4px;width:124.1px;height:28.0px;overflow:hidden"><div class="t" style="left:2.5px;top:6.1px;font:normal 19.1px/19.1px 'Liberation Sans',sans-serif;color:#000">MILA-000001</div></div>
<div class="t" style="left:1937.3px;top:1041.2px;font:normal 19.5px/19.5px 'Liberation Sans',sans-serif;color:#000;letter-spacing:0.35px">10,000.00</div>
<div class="t" style="left:2124.1px;top:1041.2px;font:normal 19.5px/19.5px 'Liberation Sans',sans-serif;color:#000;letter-spacing:0.35px">0.00</div>
<div class="t" style="left:2355.1px;top:1041.2px;font:normal 19.5px/19.5px 'Liberation Sans',sans-serif;color:#000;letter-spacing:0.35px">0.00</div>
<div class="t" style="left:1438.5px;top:1070.6px;font:normal 19px/19px 'Liberation Sans',sans-serif;color:#000;">Loans</div>
<div class="t" style="left:1494.6px;top:1070.5px;font:normal 19.1px/19.1px 'Liberation Sans',sans-serif;color:#000;">LN-001540</div>
<div class="t" style="left:1638.6px;top:1070.5px;font:normal 19.1px/19.1px 'Liberation Sans',sans-serif;color:#000;letter-spacing:1.1px">7/1/2025</div>
<div style="left:1809.4px;top:1064.4px;width:124.1px;height:28.0px;overflow:hidden"><div class="t" style="left:2.5px;top:6.1px;font:normal 19.1px/19.1px 'Liberation Sans',sans-serif;color:#000">MILA-000001</div></div>
<div class="t" style="left:1937.3px;top:1070.2px;font:normal 19.5px/19.5px 'Liberation Sans',sans-serif;color:#000;letter-spacing:0.35px">5,000.00</div>
<div class="t" style="left:2124.1px;top:1070.2px;font:normal 19.5px/19.5px 'Liberation Sans',sans-serif;color:#000;letter-spacing:0.35px">5,000.00</div>
<div class="t" style="left:2355.1px;top:1070.2px;font:normal 19.5px/19.5px 'Liberation Sans',sans-serif;color:#000;letter-spacing:0.35px">0.00</div>
<div class="t" style="left:1438.5px;top:1099.6px;font:normal 19px/19px 'Liberation Sans',sans-serif;color:#000;">Loans</div>
<div class="t" style="left:1494.6px;top:1099.5px;font:normal 19.1px/19.1px 'Liberation Sans',sans-serif;color:#000;">LN-001541</div>
<div class="t" style="left:1638.6px;top:1099.5px;font:normal 19.1px/19.1px 'Liberation Sans',sans-serif;color:#000;letter-spacing:1.1px">9/15/2025</div>
<div style="left:1809.4px;top:1093.4px;width:124.1px;height:28.0px;overflow:hidden"><div class="t" style="left:2.5px;top:6.1px;font:normal 19.1px/19.1px 'Liberation Sans',sans-serif;color:#000">MILA-000001</div></div>
<div class="t" style="left:1937.3px;top:1099.2px;font:normal 19.5px/19.5px 'Liberation Sans',sans-serif;color:#000;letter-spacing:0.35px">5,000.00</div>
<div class="t" style="left:2124.1px;top:1099.2px;font:normal 19.5px/19.5px 'Liberation Sans',sans-serif;color:#000;letter-spacing:0.35px">5,000.00</div>
<div class="t" style="left:2355.1px;top:1099.2px;font:normal 19.5px/19.5px 'Liberation Sans',sans-serif;color:#000;letter-spacing:0.35px">0.00</div>
<div class="t" style="left:1438.5px;top:1128.6px;font:normal 19px/19px 'Liberation Sans',sans-serif;color:#000;">Loans</div>
<div class="t" style="left:1494.6px;top:1128.5px;font:normal 19.1px/19.1px 'Liberation Sans',sans-serif;color:#000;">LN-001542</div>
<div class="t" style="left:1638.6px;top:1128.5px;font:normal 19.1px/19.1px 'Liberation Sans',sans-serif;color:#000;letter-spacing:1.1px">10/15/2025</div>
<div style="left:1809.4px;top:1122.4px;width:124.1px;height:28.0px;overflow:hidden"><div class="t" style="left:2.5px;top:6.1px;font:normal 19.1px/19.1px 'Liberation Sans',sans-serif;color:#000">MILA-000001</div></div>
<div class="t" style="left:1937.3px;top:1128.2px;font:normal 19.5px/19.5px 'Liberation Sans',sans-serif;color:#000;letter-spacing:0.35px">5,000.00</div>
<div class="t" style="left:2124.1px;top:1128.2px;font:normal 19.5px/19.5px 'Liberation Sans',sans-serif;color:#000;letter-spacing:0.35px">5,000.00</div>
<div class="t" style="left:2355.1px;top:1128.2px;font:normal 19.5px/19.5px 'Liberation Sans',sans-serif;color:#000;letter-spacing:0.35px">0.00</div>
<div class="t" style="left:1438.5px;top:1157.6px;font:normal 19px/19px 'Liberation Sans',sans-serif;color:#000;">Loans</div>
<div class="t" style="left:1494.6px;top:1157.5px;font:normal 19.1px/19.1px 'Liberation Sans',sans-serif;color:#000;">LN-001543</div>
<div class="t" style="left:1638.6px;top:1157.5px;font:normal 19.1px/19.1px 'Liberation Sans',sans-serif;color:#000;letter-spacing:1.1px">10/15/2025</div>
<div style="left:1809.4px;top:1151.4px;width:124.1px;height:28.0px;overflow:hidden"><div class="t" style="left:2.5px;top:6.1px;font:normal 19.1px/19.1px 'Liberation Sans',sans-serif;color:#000">MILA-000001</div></div>
<div class="t" style="left:1937.3px;top:1157.2px;font:normal 19.5px/19.5px 'Liberation Sans',sans-serif;color:#000;letter-spacing:0.35px">5,000.00</div>
<div class="t" style="left:2124.1px;top:1157.2px;font:normal 19.5px/19.5px 'Liberation Sans',sans-serif;color:#000;letter-spacing:0.35px">5,000.00</div>
<div class="t" style="left:2355.1px;top:1157.2px;font:normal 19.5px/19.5px 'Liberation Sans',sans-serif;color:#000;letter-spacing:0.35px">0.00</div>
<div class="t" style="left:1438.5px;top:1186.6px;font:normal 19px/19px 'Liberation Sans',sans-serif;color:#000;">Loans</div>
<div class="t" style="left:1494.6px;top:1186.5px;font:normal 19.1px/19.1px 'Liberation Sans',sans-serif;color:#000;">LN-001544</div>
<div class="t" style="left:1638.6px;top:1186.5px;font:normal 19.1px/19.1px 'Liberation Sans',sans-serif;color:#000;letter-spacing:1.1px">10/15/2025</div>
<div style="left:1809.4px;top:1180.4px;width:124.1px;height:28.0px;overflow:hidden"><div class="t" style="left:2.5px;top:6.1px;font:normal 19.1px/19.1px 'Liberation Sans',sans-serif;color:#000">MILA-000001</div></div>
<div class="t" style="left:1937.3px;top:1186.2px;font:normal 19.5px/19.5px 'Liberation Sans',sans-serif;color:#000;letter-spacing:0.35px">5,000.00</div>
<div class="t" style="left:2124.1px;top:1186.2px;font:normal 19.5px/19.5px 'Liberation Sans',sans-serif;color:#000;letter-spacing:0.35px">5,000.00</div>
<div class="t" style="left:2355.1px;top:1186.2px;font:normal 19.5px/19.5px 'Liberation Sans',sans-serif;color:#000;letter-spacing:0.35px">0.00</div>
<div class="t" style="left:1438.5px;top:1215.6px;font:normal 19px/19px 'Liberation Sans',sans-serif;color:#000;">Loans</div>
<div class="t" style="left:1494.6px;top:1215.5px;font:normal 19.1px/19.1px 'Liberation Sans',sans-serif;color:#000;">LN-001545</div>
<div class="t" style="left:1638.6px;top:1215.5px;font:normal 19.1px/19.1px 'Liberation Sans',sans-serif;color:#000;letter-spacing:1.1px">10/15/2025</div>
<div style="left:1809.4px;top:1209.4px;width:124.1px;height:28.0px;overflow:hidden"><div class="t" style="left:2.5px;top:6.1px;font:normal 19.1px/19.1px 'Liberation Sans',sans-serif;color:#000">MILA-000001</div></div>
<div class="t" style="left:1937.3px;top:1215.2px;font:normal 19.5px/19.5px 'Liberation Sans',sans-serif;color:#000;letter-spacing:0.35px">5,000.00</div>
<div class="t" style="left:2124.1px;top:1215.2px;font:normal 19.5px/19.5px 'Liberation Sans',sans-serif;color:#000;letter-spacing:0.35px">5,000.00</div>
<div class="t" style="left:2355.1px;top:1215.2px;font:normal 19.5px/19.5px 'Liberation Sans',sans-serif;color:#000;letter-spacing:0.35px">0.00</div>
<div class="t" style="left:1438.5px;top:1244.6px;font:normal 19px/19px 'Liberation Sans',sans-serif;color:#000;">Loans</div>
<div class="t" style="left:1494.6px;top:1244.5px;font:normal 19.1px/19.1px 'Liberation Sans',sans-serif;color:#000;">LN-001546</div>
<div class="t" style="left:1638.6px;top:1244.5px;font:normal 19.1px/19.1px 'Liberation Sans',sans-serif;color:#000;letter-spacing:1.1px">10/15/2025</div>
<div style="left:1809.4px;top:1238.4px;width:124.1px;height:28.0px;overflow:hidden"><div class="t" style="left:2.5px;top:6.1px;font:normal 19.1px/19.1px 'Liberation Sans',sans-serif;color:#000">MILA-000001</div></div>
<div class="t" style="left:1937.3px;top:1244.2px;font:normal 19.5px/19.5px 'Liberation Sans',sans-serif;color:#000;letter-spacing:0.35px">5,000.00</div>
<div class="t" style="left:2124.1px;top:1244.2px;font:normal 19.5px/19.5px 'Liberation Sans',sans-serif;color:#000;letter-spacing:0.35px">5,000.00</div>
<div class="t" style="left:2355.1px;top:1244.2px;font:normal 19.5px/19.5px 'Liberation Sans',sans-serif;color:#000;letter-spacing:0.35px">0.00</div>
<div class="t" style="left:1438.5px;top:1273.6px;font:normal 19px/19px 'Liberation Sans',sans-serif;color:#000;">Loans</div>
<div class="t" style="left:1494.6px;top:1273.5px;font:normal 19.1px/19.1px 'Liberation Sans',sans-serif;color:#000;">LN-001547</div>
<div class="t" style="left:1638.6px;top:1273.5px;font:normal 19.1px/19.1px 'Liberation Sans',sans-serif;color:#000;letter-spacing:1.1px">10/15/2025</div>
<div style="left:1809.4px;top:1267.4px;width:124.1px;height:28.0px;overflow:hidden"><div class="t" style="left:2.5px;top:6.1px;font:normal 19.1px/19.1px 'Liberation Sans',sans-serif;color:#000">MILA-000001</div></div>
<div class="t" style="left:1937.3px;top:1273.2px;font:normal 19.5px/19.5px 'Liberation Sans',sans-serif;color:#000;letter-spacing:0.35px">5,000.00</div>
<div class="t" style="left:2124.1px;top:1273.2px;font:normal 19.5px/19.5px 'Liberation Sans',sans-serif;color:#000;letter-spacing:0.35px">5,000.00</div>
<div class="t" style="left:2355.1px;top:1273.2px;font:normal 19.5px/19.5px 'Liberation Sans',sans-serif;color:#000;letter-spacing:0.35px">0.00</div>
<div class="t" style="left:1438.5px;top:1302.6px;font:normal 19px/19px 'Liberation Sans',sans-serif;color:#000;">Loans</div>
<div class="t" style="left:1494.6px;top:1302.5px;font:normal 19.1px/19.1px 'Liberation Sans',sans-serif;color:#000;">LN-001548</div>
<div class="t" style="left:1638.6px;top:1302.5px;font:normal 19.1px/19.1px 'Liberation Sans',sans-serif;color:#000;letter-spacing:1.1px">10/15/2025</div>
<div style="left:1809.4px;top:1296.4px;width:124.1px;height:28.0px;overflow:hidden"><div class="t" style="left:2.5px;top:6.1px;font:normal 19.1px/19.1px 'Liberation Sans',sans-serif;color:#000">MILA-000001</div></div>
<div class="t" style="left:1937.3px;top:1302.2px;font:normal 19.5px/19.5px 'Liberation Sans',sans-serif;color:#000;letter-spacing:0.35px">5,000.00</div>
<div class="t" style="left:2124.1px;top:1302.2px;font:normal 19.5px/19.5px 'Liberation Sans',sans-serif;color:#000;letter-spacing:0.35px">5,000.00</div>
<div class="t" style="left:2355.1px;top:1302.2px;font:normal 19.5px/19.5px 'Liberation Sans',sans-serif;color:#000;letter-spacing:0.35px">0.00</div>
<div class="t" style="left:1438.5px;top:1331.6px;font:normal 19px/19px 'Liberation Sans',sans-serif;color:#000;">Loans</div>
<div class="t" style="left:1494.6px;top:1331.5px;font:normal 19.1px/19.1px 'Liberation Sans',sans-serif;color:#000;">LN-001549</div>
<div class="t" style="left:1638.6px;top:1331.5px;font:normal 19.1px/19.1px 'Liberation Sans',sans-serif;color:#000;letter-spacing:1.1px">10/15/2025</div>
<div style="left:1809.4px;top:1325.4px;width:124.1px;height:28.0px;overflow:hidden"><div class="t" style="left:2.5px;top:6.1px;font:normal 19.1px/19.1px 'Liberation Sans',sans-serif;color:#000">MILA-000001</div></div>
<div class="t" style="left:1937.3px;top:1331.2px;font:normal 19.5px/19.5px 'Liberation Sans',sans-serif;color:#000;letter-spacing:0.35px">5,000.00</div>
<div class="t" style="left:2124.1px;top:1331.2px;font:normal 19.5px/19.5px 'Liberation Sans',sans-serif;color:#000;letter-spacing:0.35px">5,000.00</div>
<div class="t" style="left:2355.1px;top:1331.2px;font:normal 19.5px/19.5px 'Liberation Sans',sans-serif;color:#000;letter-spacing:0.35px">0.00</div>
<div class="t" style="left:1438.5px;top:1360.6px;font:normal 19px/19px 'Liberation Sans',sans-serif;color:#000;">Loans</div>
<div class="t" style="left:1494.6px;top:1360.5px;font:normal 19.1px/19.1px 'Liberation Sans',sans-serif;color:#000;">LN-001550</div>
<div class="t" style="left:1638.6px;top:1360.5px;font:normal 19.1px/19.1px 'Liberation Sans',sans-serif;color:#000;letter-spacing:1.1px">10/15/2025</div>
<div style="left:1809.4px;top:1354.4px;width:124.1px;height:28.0px;overflow:hidden"><div class="t" style="left:2.5px;top:6.1px;font:normal 19.1px/19.1px 'Liberation Sans',sans-serif;color:#000">MILA-000001</div></div>
<div class="t" style="left:1937.3px;top:1360.2px;font:normal 19.5px/19.5px 'Liberation Sans',sans-serif;color:#000;letter-spacing:0.35px">5,000.00</div>
<div class="t" style="left:2124.1px;top:1360.2px;font:normal 19.5px/19.5px 'Liberation Sans',sans-serif;color:#000;letter-spacing:0.35px">5,000.00</div>
<div class="t" style="left:2355.1px;top:1360.2px;font:normal 19.5px/19.5px 'Liberation Sans',sans-serif;color:#000;letter-spacing:0.35px">0.00</div>
<div class="t" style="left:1438.5px;top:1389.6px;font:normal 19px/19px 'Liberation Sans',sans-serif;color:#000;">Loans</div>
<div class="t" style="left:1494.6px;top:1389.5px;font:normal 19.1px/19.1px 'Liberation Sans',sans-serif;color:#000;">LN-001551</div>
<div class="t" style="left:1638.6px;top:1389.5px;font:normal 19.1px/19.1px 'Liberation Sans',sans-serif;color:#000;letter-spacing:1.1px">10/15/2025</div>
<div style="left:1809.4px;top:1383.4px;width:124.1px;height:28.0px;overflow:hidden"><div class="t" style="left:2.5px;top:6.1px;font:normal 19.1px/19.1px 'Liberation Sans',sans-serif;color:#000">MILA-000001</div></div>
<div class="t" style="left:1937.3px;top:1389.2px;font:normal 19.5px/19.5px 'Liberation Sans',sans-serif;color:#000;letter-spacing:0.35px">5,000.00</div>
<div class="t" style="left:2124.1px;top:1389.2px;font:normal 19.5px/19.5px 'Liberation Sans',sans-serif;color:#000;letter-spacing:0.35px">5,000.00</div>
<div class="t" style="left:2355.1px;top:1389.2px;font:normal 19.5px/19.5px 'Liberation Sans',sans-serif;color:#000;letter-spacing:0.35px">0.00</div>
<div style="left:1490.3px;top:512.4px;width:145.1px;height:31px;border:2px solid #217346;box-sizing:border-box"></div>
<div style="left:1630.5px;top:539.4px;width:6px;height:6px;background:#217346;border:1px solid #fff"></div>
<div class="t" style="left:2124.5px;top:1418.1px;font:bold 19.4px/19.4px 'Liberation Sans',sans-serif;color:#000;">646,200,464,354.00</div>
<svg style="left:0px;top:0px;pointer-events:none" width="2403" height="1722" viewBox="0 0 2403 1722"><defs><filter id="rough" x="-5%" y="-5%" width="110%" height="110%"><feTurbulence type="fractalNoise" baseFrequency="0.9" numOctaves="1" seed="3"/><feDisplacementMap in="SourceGraphic" scale="1.6"/></filter></defs><path d="M1267.2 258.0 L1304.8 258.0 L1304.8 299.6 L1323.4 299.6 L1286.5 335.6 L1248.2 299.6 L1267.2 299.6 Z" fill="#ffffff"/><path d="M2193.7 204.2 L2238.5 204.2 L2238.5 252.3 L2257.6 252.3 L2216.0 297.8 L2174.0 252.3 L2193.7 252.3 Z" fill="#ffffff"/><g opacity="0.9"><path d="M1267.2 258.0 L1304.8 258.0 L1304.8 299.6 L1323.4 299.6 L1286.5 335.6 L1248.2 299.6 L1267.2 299.6 Z" fill="none" stroke="#e23a46" stroke-width="3.3" stroke-linejoin="round"/><path d="M2193.7 204.2 L2238.5 204.2 L2238.5 252.3 L2257.6 252.3 L2216.0 297.8 L2174.0 252.3 L2193.7 252.3 Z" fill="none" stroke="#e23a46" stroke-width="3.3" stroke-linejoin="round"/><rect x="99.7" y="525.6" width="125.2" height="44.2" rx="4" fill="none" stroke="#e23a46" stroke-width="3.3"/><rect x="1227.2" y="525.8" width="120.4" height="43.6" rx="4" fill="none" stroke="#e23a46" stroke-width="3.3"/><rect x="1132.7" y="1655.4" width="228.3" height="31.6" rx="4" fill="none" stroke="#e23a46" stroke-width="3.3"/><rect x="1488.4" y="511.6" width="146.6" height="32.0" rx="4" fill="none" stroke="#e23a46" stroke-width="3.3"/><rect x="2122.2" y="511.4" width="109.8" height="32.1" rx="4" fill="none" stroke="#e23a46" stroke-width="3.3"/><rect x="2118.0" y="1411.7" width="207.1" height="40.7" rx="4" fill="none" stroke="#e23a46" stroke-width="3.3"/></g></svg>
</body></html>
